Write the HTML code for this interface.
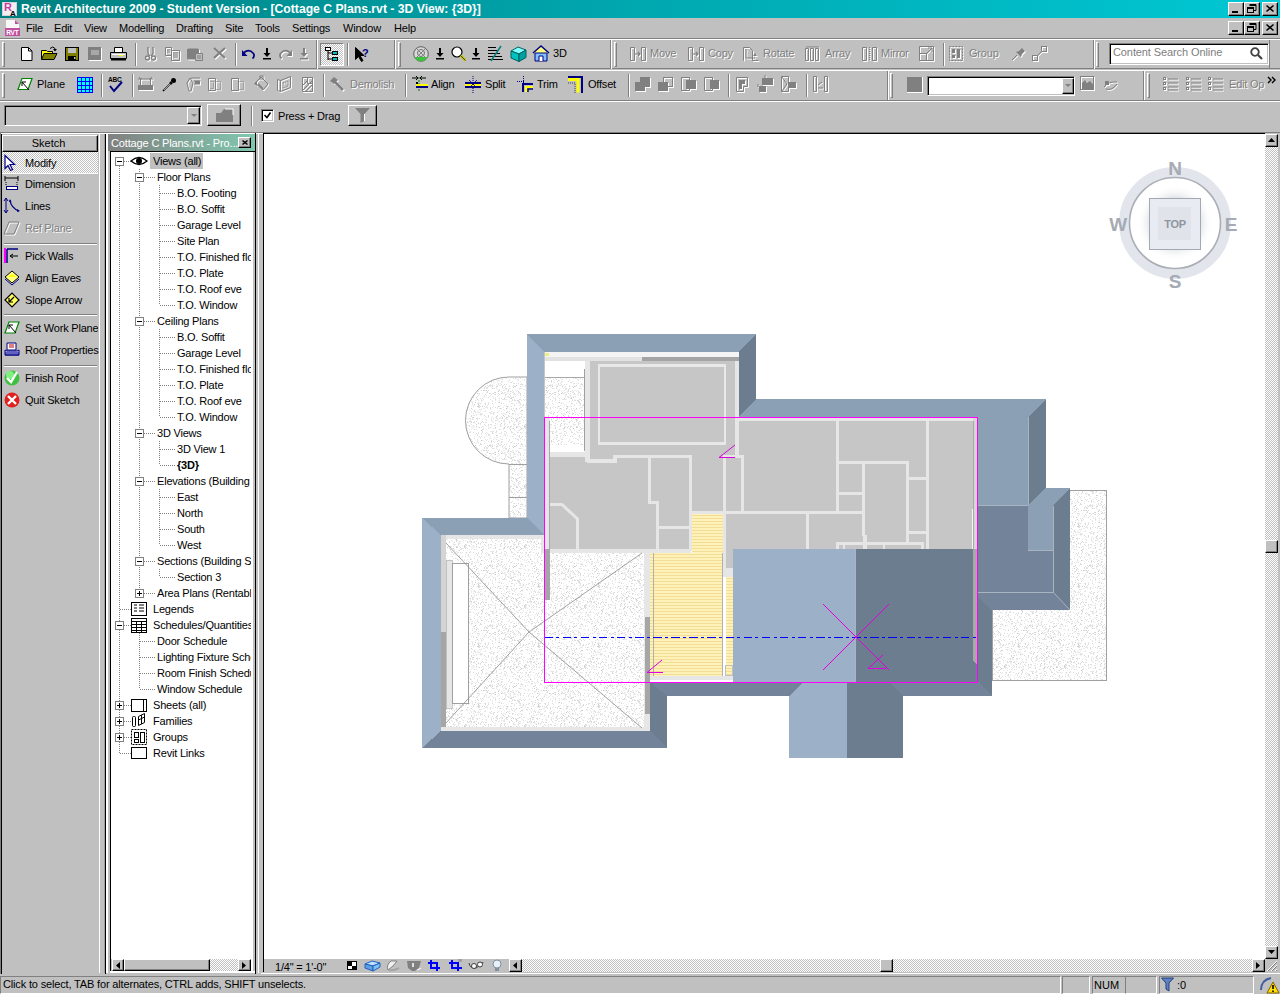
<!DOCTYPE html>
<html><head><meta charset="utf-8"><style>
*{margin:0;padding:0;box-sizing:border-box}
html,body{width:1280px;height:994px;overflow:hidden;background:#c0c0c0;font-family:"Liberation Sans",sans-serif;font-size:11px;letter-spacing:-0.2px;color:#000}
.a{position:absolute}
.t{position:absolute;white-space:nowrap;line-height:12px}
.gt{color:#808080;text-shadow:1px 1px 0 #fff}
.btn{position:absolute;background:#c0c0c0;border-top:1px solid #fff;border-left:1px solid #fff;border-right:1px solid #000;border-bottom:1px solid #000;box-shadow:inset -1px -1px 0 #808080}
.sunk{position:absolute;border-top:1px solid #808080;border-left:1px solid #808080;border-right:1px solid #fff;border-bottom:1px solid #fff}
.sunk2{position:absolute;border-top:1px solid #808080;border-left:1px solid #808080;border-right:1px solid #fff;border-bottom:1px solid #fff;box-shadow:inset 1px 1px 0 #000,inset -1px -1px 0 #c0c0c0}
.grip{position:absolute;width:3px;border-left:1px solid #fff;border-top:1px solid #fff;border-right:1px solid #808080;border-bottom:1px solid #808080}
.sep{position:absolute;width:2px;border-left:1px solid #808080;border-right:1px solid #fff}
.hsep{position:absolute;height:2px;border-top:1px solid #808080;border-bottom:1px solid #fff}
.dith{background-color:#c0c0c0;background-image:linear-gradient(45deg,#fff 25%,transparent 25%,transparent 75%,#fff 75%,#fff),linear-gradient(45deg,#fff 25%,transparent 25%,transparent 75%,#fff 75%,#fff);background-size:2px 2px;background-position:0 0,1px 1px}
svg.i{position:absolute;overflow:visible}
</style></head><body>
<div class="a" style="left:0px;top:0px;width:1280px;height:18px;background:linear-gradient(90deg,#008080 0%,#00a8b0 50%,#00c8d4 100%);"></div>
<svg class="i" style="left:2px;top:1px;" width="16" height="16" viewBox="0 0 16 16"><rect x="0.5" y="1.5" width="14" height="13" fill="#f4eef2" stroke="#d8d0d8"/><text x="2" y="10" font-size="11" font-weight="bold" fill="#c040a0" font-family="Liberation Sans">R</text><text x="8" y="15" font-size="8" font-weight="bold" fill="#000" font-family="Liberation Sans">A</text></svg>
<div class="t" style="left:21px;top:2px;color:#fff;font-weight:bold;font-size:12.2px;letter-spacing:0;line-height:14px">Revit Architecture 2009 - Student Version - [Cottage C Plans.rvt - 3D View: {3D}]</div>
<div class="btn" style="left:1228px;top:2px;width:16px;height:14px;"></div>
<div class="a" style="left:1232px;top:11px;width:6px;height:2px;background:#000;"></div>
<div class="btn" style="left:1244px;top:2px;width:16px;height:14px;"></div>
<svg class="i" style="left:1247px;top:4px;" width="10" height="9" viewBox="0 0 10 9"><path d="M3 0.5h6v6h-2M3 0v2" stroke="#000" fill="none"/><rect x="3" y="0" width="6" height="2" fill="#000"/><rect x="0.5" y="3.5" width="6" height="5" fill="none" stroke="#000"/><rect x="0" y="3" width="7" height="2" fill="#000"/></svg>
<div class="btn" style="left:1262px;top:2px;width:16px;height:14px;"></div>
<svg class="i" style="left:1266px;top:5px;" width="8" height="7" viewBox="0 0 8 7"><path d="M0.5 0.5L7.5 6.5M7.5 0.5L0.5 6.5" stroke="#000" stroke-width="1.6"/></svg>
<svg class="i" style="left:4px;top:19px;" width="17" height="17" viewBox="0 0 17 17"><path d="M2 1h9l4 4v11H2z" fill="#f8f8f8"/><path d="M11 1l4 4h-4z" fill="#c050a0"/><rect x="1" y="9" width="15" height="8" fill="#c050a0"/><text x="2.2" y="16" font-size="6.5" font-weight="bold" fill="#fff" font-family="Liberation Sans">RVT</text></svg>
<div class="t" style="left:26px;top:22px;">File</div>
<div class="t" style="left:54px;top:22px;">Edit</div>
<div class="t" style="left:84px;top:22px;">View</div>
<div class="t" style="left:119px;top:22px;">Modelling</div>
<div class="t" style="left:176px;top:22px;">Drafting</div>
<div class="t" style="left:225px;top:22px;">Site</div>
<div class="t" style="left:255px;top:22px;">Tools</div>
<div class="t" style="left:292px;top:22px;">Settings</div>
<div class="t" style="left:343px;top:22px;">Window</div>
<div class="t" style="left:394px;top:22px;">Help</div>
<div class="btn" style="left:1228px;top:21px;width:16px;height:14px;"></div>
<div class="a" style="left:1232px;top:30px;width:6px;height:2px;background:#000;"></div>
<div class="btn" style="left:1244px;top:21px;width:16px;height:14px;"></div>
<svg class="i" style="left:1247px;top:23px;" width="10" height="9" viewBox="0 0 10 9"><path d="M3 0.5h6v6h-2M3 0v2" stroke="#000" fill="none"/><rect x="3" y="0" width="6" height="2" fill="#000"/><rect x="0.5" y="3.5" width="6" height="5" fill="none" stroke="#000"/><rect x="0" y="3" width="7" height="2" fill="#000"/></svg>
<div class="btn" style="left:1262px;top:21px;width:16px;height:14px;"></div>
<svg class="i" style="left:1266px;top:24px;" width="8" height="7" viewBox="0 0 8 7"><path d="M0.5 0.5L7.5 6.5M7.5 0.5L0.5 6.5" stroke="#000" stroke-width="1.6"/></svg>
<div class="a" style="left:0px;top:38px;width:1280px;height:1px;background:#808080;"></div>
<div class="a" style="left:0px;top:39px;width:1280px;height:1px;background:#fff;"></div>
<div class="a" style="left:0px;top:68px;width:1280px;height:1px;background:#808080;"></div>
<div class="a" style="left:0px;top:70px;width:1280px;height:1px;background:#fff;"></div>
<div class="a" style="left:0px;top:100px;width:1280px;height:1px;background:#808080;"></div>
<div class="a" style="left:0px;top:101px;width:1280px;height:1px;background:#fff;"></div>
<div class="a" style="left:0px;top:132px;width:1280px;height:1px;background:#808080;"></div>
<div class="a" style="left:0px;top:133px;width:263px;height:1px;background:#fff;"></div>
<div class="a" style="left:316px;top:40px;width:1px;height:29px;background:#808080;"></div>
<div class="a" style="left:317px;top:40px;width:1px;height:29px;background:#fff;"></div>
<div class="a" style="left:394px;top:40px;width:1px;height:29px;background:#808080;"></div>
<div class="a" style="left:395px;top:40px;width:1px;height:29px;background:#fff;"></div>
<div class="a" style="left:610px;top:40px;width:1px;height:29px;background:#808080;"></div>
<div class="a" style="left:611px;top:40px;width:1px;height:29px;background:#fff;"></div>
<div class="a" style="left:1093px;top:40px;width:1px;height:29px;background:#808080;"></div>
<div class="a" style="left:1094px;top:40px;width:1px;height:29px;background:#fff;"></div>
<div class="a" style="left:887px;top:71px;width:1px;height:29px;background:#808080;"></div>
<div class="a" style="left:888px;top:71px;width:1px;height:29px;background:#fff;"></div>
<div class="a" style="left:1143px;top:71px;width:1px;height:29px;background:#808080;"></div>
<div class="a" style="left:1144px;top:71px;width:1px;height:29px;background:#fff;"></div>
<div class="a" style="left:1269px;top:40px;width:1px;height:29px;background:#808080;"></div>
<div class="grip" style="left:2px;top:42px;height:25px"></div>
<div class="grip" style="left:398px;top:42px;height:25px"></div>
<div class="grip" style="left:614px;top:42px;height:25px"></div>
<div class="grip" style="left:1096px;top:42px;height:25px"></div>
<div class="grip" style="left:2px;top:73px;height:25px"></div>
<div class="grip" style="left:890px;top:73px;height:25px"></div>
<div class="grip" style="left:1147px;top:73px;height:25px"></div>
<div class="sep" style="left:135px;top:43px;height:23px"></div>
<div class="sep" style="left:235px;top:43px;height:23px"></div>
<div class="sep" style="left:347px;top:43px;height:23px"></div>
<div class="sep" style="left:943px;top:43px;height:23px"></div>
<div class="sep" style="left:101px;top:74px;height:23px"></div>
<div class="sep" style="left:132px;top:74px;height:23px"></div>
<div class="sep" style="left:323px;top:74px;height:23px"></div>
<div class="sep" style="left:405px;top:74px;height:23px"></div>
<div class="sep" style="left:628px;top:74px;height:23px"></div>
<div class="sep" style="left:728px;top:74px;height:23px"></div>
<div class="sep" style="left:806px;top:74px;height:23px"></div>
<svg class="i" style="left:21px;top:47px;" width="12" height="14" viewBox="0 0 12 14"><path d="M0.5 0.5h7l3.5 3.5v9.5h-10.5z" fill="#fff" stroke="#000"/><path d="M7.5 0.5v3.5h3.5" fill="none" stroke="#000"/></svg>
<svg class="i" style="left:41px;top:46px;" width="17" height="15" viewBox="0 0 17 15"><path d="M0.5 4.5h5l1 1h5v7.5h-11z" fill="#ffff00" stroke="#000"/><path d="M3 7.5h13l-3 6h-12.5z" fill="#808000" stroke="#000"/><path d="M9 2.5q3-3 5 0v2" fill="none" stroke="#000"/><path d="M12 3h4l-2 2.5z" fill="#000"/></svg>
<svg class="i" style="left:65px;top:47px;" width="14" height="14" viewBox="0 0 14 14"><rect x="0.5" y="0.5" width="13" height="13" fill="#808000" stroke="#000"/><rect x="3" y="1" width="8" height="5" fill="#c0c0c0"/><rect x="3" y="9" width="8" height="5" fill="#000"/><rect x="9" y="10" width="1.5" height="2" fill="#c0c0c0"/></svg>
<svg class="i" style="left:88px;top:47px;" width="16" height="15" viewBox="0 0 16 15"><g transform="translate(1,1)" fill="#fff" stroke="#fff"><rect x="0" y="0" width="13" height="13" stroke="none"/></g><g fill="#808080" stroke="#808080"><rect x="0" y="0" width="13" height="13" stroke="none"/></g><rect x="3" y="3" width="8" height="5" fill="#a8a8a8"/></svg>
<svg class="i" style="left:110px;top:47px;" width="17" height="14" viewBox="0 0 17 14"><path d="M4.5 0.5h8v5h-8z" fill="#fff" stroke="#000"/><path d="M0.5 5.5h16v6h-16z" fill="#c0c0c0" stroke="#000"/><rect x="1" y="11" width="15" height="2.5" fill="#000"/><rect x="9" y="8" width="4" height="1" fill="#ff0"/><path d="M2 7.5h13" stroke="#fff"/></svg>
<svg class="i" style="left:145px;top:47px;" width="11" height="15" viewBox="0 0 11 15"><g transform="translate(1,1)" fill="#fff" stroke="#fff"><path d="M3 0v7M8 0v7" stroke-width="1.3"/><circle cx="2.5" cy="11" r="2" fill="none" stroke-width="1.3"/><circle cx="8.5" cy="11" r="2" fill="none" stroke-width="1.3"/><path d="M3 7l2 2M8 7l-2 2" stroke-width="1.3"/></g><g fill="#808080" stroke="#808080"><path d="M3 0v7M8 0v7" stroke-width="1.3"/><circle cx="2.5" cy="11" r="2" fill="none" stroke-width="1.3"/><circle cx="8.5" cy="11" r="2" fill="none" stroke-width="1.3"/><path d="M3 7l2 2M8 7l-2 2" stroke-width="1.3"/></g></svg>
<svg class="i" style="left:165px;top:47px;" width="16" height="15" viewBox="0 0 16 15"><g transform="translate(1,1)" fill="#fff" stroke="#fff"><path d="M0.5 0.5h6v8h-6z M6.5 3.5h8v10h-8z" fill="none"/><path d="M2 3h3M2 5h3M8 6h5M8 8h5M8 10h5" /></g><g fill="#808080" stroke="#808080"><path d="M0.5 0.5h6v8h-6z M6.5 3.5h8v10h-8z" fill="none"/><path d="M2 3h3M2 5h3M8 6h5M8 8h5M8 10h5" /></g></svg>
<svg class="i" style="left:187px;top:47px;" width="17" height="15" viewBox="0 0 17 15"><g transform="translate(1,1)" fill="#fff" stroke="#fff"><rect x="0" y="1.5" width="12" height="11" rx="1.5" stroke="none"/></g><g fill="#808080" stroke="#808080"><rect x="0" y="1.5" width="12" height="11" rx="1.5" stroke="none"/></g><path d="M8.5 6.5h7v7h-7z" fill="#c0c0c0" stroke="#808080"/><path d="M10 9h4M10 11h4" stroke="#808080"/></svg>
<svg class="i" style="left:213px;top:47px;" width="14" height="13" viewBox="0 0 14 13"><g transform="translate(1,1)" fill="#fff" stroke="#fff"><path d="M1 1L12 11M12 1L1 11" stroke-width="2.2"/></g><g fill="#808080" stroke="#808080"><path d="M1 1L12 11M12 1L1 11" stroke-width="2.2"/></g></svg>
<svg class="i" style="left:242px;top:49px;" width="13" height="10" viewBox="0 0 13 10"><path d="M2 3.5q5-4 9.5 1q1.5 3-1 5" fill="none" stroke="#000080" stroke-width="1.7"/><path d="M0 1v6h5.5z" fill="#000080"/></svg>
<svg class="i" style="left:263px;top:48px;" width="8" height="12" viewBox="0 0 8 12"><path d="M4 0v7" stroke="#000" stroke-width="2"/><path d="M0.5 5h7L4 9z" fill="#000"/><rect x="0" y="10" width="8" height="1.5" fill="#000"/></svg>
<svg class="i" style="left:279px;top:49px;" width="14" height="10" viewBox="0 0 14 10"><g transform="translate(1,1)" fill="#fff" stroke="#fff"><path d="M11 3.5q-5-4-9.5 1q-1.5 3 1 5" fill="none" stroke-width="1.7"/><path d="M13 1v6h-5.5z" stroke="none"/></g><g fill="#808080" stroke="#808080"><path d="M11 3.5q-5-4-9.5 1q-1.5 3 1 5" fill="none" stroke-width="1.7"/><path d="M13 1v6h-5.5z" stroke="none"/></g></svg>
<svg class="i" style="left:300px;top:48px;" width="9" height="13" viewBox="0 0 9 13"><g transform="translate(1,1)" fill="#fff" stroke="#fff"><path d="M4 0v7" stroke-width="2"/><path d="M0.5 5h7L4 9z" stroke="none"/><rect x="0" y="10" width="8" height="1.5" stroke="none"/></g><g fill="#808080" stroke="#808080"><path d="M4 0v7" stroke-width="2"/><path d="M0.5 5h7L4 9z" stroke="none"/><rect x="0" y="10" width="8" height="1.5" stroke="none"/></g></svg>
<div class="a dith" style="left:320px;top:43px;width:24px;height:23px;border-top:1px solid #808080;border-left:1px solid #808080;border-right:1px solid #fff;border-bottom:1px solid #fff"></div>
<svg class="i" style="left:325px;top:47px;" width="14" height="15" viewBox="0 0 14 15"><path d="M3 2v11M3 6h5M3 12h5" stroke="#000" fill="none"/><rect x="0.5" y="0.5" width="5" height="3" fill="#fff" stroke="#000"/><rect x="7.5" y="4.5" width="5" height="3" fill="#00c0c0" stroke="#000"/><rect x="7.5" y="10.5" width="5" height="3" fill="#00c0c0" stroke="#000"/></svg>
<svg class="i" style="left:355px;top:47px;" width="16" height="15" viewBox="0 0 16 15"><path d="M0.5 0.5v12l3-3l3 5l1.5-1l-3-5h4z" fill="#000" stroke="#000"/><text x="7" y="10" font-size="11" font-weight="bold" fill="#000080" font-family="Liberation Sans">?</text></svg>
<svg class="i" style="left:413px;top:46px;" width="16" height="16" viewBox="0 0 16 16"><circle cx="8" cy="8" r="7.3" fill="#d8d8d8" stroke="#606060"/><path d="M1.5 11a7 7 0 0 0 13 0z" fill="#40c040"/><circle cx="8" cy="7" r="3.5" fill="none" stroke="#707070"/><path d="M4 3l8 8M12 3l-8 8" stroke="#808080"/></svg>
<svg class="i" style="left:436px;top:48px;" width="8" height="12" viewBox="0 0 8 12"><path d="M4 0v7" stroke="#000" stroke-width="2"/><path d="M0.5 5h7L4 9z" fill="#000"/><rect x="0" y="10" width="8" height="1.5" fill="#000"/></svg>
<svg class="i" style="left:451px;top:46px;" width="16" height="16" viewBox="0 0 16 16"><circle cx="6" cy="6" r="5" fill="#fff" stroke="#000" stroke-width="1.2"/><path d="M9.5 9.5l5 5" stroke="#c0c000" stroke-width="2.5"/><path d="M9.5 9.5l5 5" stroke="#000" stroke-width="0.6"/></svg>
<svg class="i" style="left:472px;top:48px;" width="8" height="12" viewBox="0 0 8 12"><path d="M4 0v7" stroke="#000" stroke-width="2"/><path d="M0.5 5h7L4 9z" fill="#000"/><rect x="0" y="10" width="8" height="1.5" fill="#000"/></svg>
<svg class="i" style="left:488px;top:46px;" width="16" height="16" viewBox="0 0 16 16"><path d="M0 1.5h8M0 4.5h10M0 7.5h12M0 10.5h14M0 13.5h15" stroke="#000"/><path d="M3 15L13 0" stroke="#008080" stroke-width="1.5"/></svg>
<svg class="i" style="left:510px;top:46px;" width="17" height="16" viewBox="0 0 17 16"><path d="M1 5l7-4l8 3l-7 4z" fill="#80ffff" stroke="#006060"/><path d="M1 5v7l8 3.5v-7.5z" fill="#00c0c0" stroke="#006060"/><path d="M9 8l7-4v7.5l-7 4z" fill="#00a0a0" stroke="#006060"/></svg>
<svg class="i" style="left:532px;top:45px;" width="18" height="17" viewBox="0 0 18 17"><path d="M1 8l8-7l8 7" fill="#ffff80" stroke="#000080" stroke-width="1.5"/><path d="M3 8v8h12v-8z" fill="#80c0ff" stroke="#000080"/><path d="M7 16v-5h4v5" fill="#fff" stroke="#000080"/></svg>
<div class="t" style="left:553px;top:47px;letter-spacing:0">3D</div>
<svg class="i" style="left:630px;top:47px;" width="16" height="15" viewBox="0 0 16 15"><g transform="translate(1,1)" fill="#fff" stroke="#fff"><path d="M0.5 0.5h4v13h-4zM11.5 0.5h4v13h-4z" fill="none"/><path d="M5 7h5M8 5l2 2l-2 2" fill="none" stroke-width="1.2"/></g><g fill="#808080" stroke="#808080"><path d="M0.5 0.5h4v13h-4zM11.5 0.5h4v13h-4z" fill="none"/><path d="M5 7h5M8 5l2 2l-2 2" fill="none" stroke-width="1.2"/></g></svg>
<svg class="i" style="left:688px;top:47px;" width="16" height="15" viewBox="0 0 16 15"><g transform="translate(1,1)" fill="#fff" stroke="#fff"><path d="M0.5 0.5h4v13h-4zM11.5 0.5h4v13h-4z" fill="none"/><path d="M5 7h5M8 5l2 2l-2 2" fill="none" stroke-width="1.2"/></g><g fill="#808080" stroke="#808080"><path d="M0.5 0.5h4v13h-4zM11.5 0.5h4v13h-4z" fill="none"/><path d="M5 7h5M8 5l2 2l-2 2" fill="none" stroke-width="1.2"/></g></svg>
<svg class="i" style="left:743px;top:47px;" width="16" height="15" viewBox="0 0 16 15"><g transform="translate(1,1)" fill="#fff" stroke="#fff"><path d="M0.5 13.5V0.5h6l3 3V13.5h6" fill="none"/><path d="M3 2v9h9" fill="none"/><path d="M12 6l2 3h-4z" stroke="none"/></g><g fill="#808080" stroke="#808080"><path d="M0.5 13.5V0.5h6l3 3V13.5h6" fill="none"/><path d="M3 2v9h9" fill="none"/><path d="M12 6l2 3h-4z" stroke="none"/></g></svg>
<svg class="i" style="left:805px;top:47px;" width="16" height="15" viewBox="0 0 16 15"><g transform="translate(1,1)" fill="#fff" stroke="#fff"><path d="M0.5 1.5h3v12h-3zM5.5 1.5h3v12h-3zM10.5 1.5h3v12h-3z" fill="none"/><path d="M1 0h13" /></g><g fill="#808080" stroke="#808080"><path d="M0.5 1.5h3v12h-3zM5.5 1.5h3v12h-3zM10.5 1.5h3v12h-3z" fill="none"/><path d="M1 0h13" /></g></svg>
<svg class="i" style="left:862px;top:47px;" width="16" height="15" viewBox="0 0 16 15"><g transform="translate(1,1)" fill="#fff" stroke="#fff"><path d="M0.5 0.5h4v13h-4zM10.5 0.5h4v13h-4z" fill="none"/><path d="M7.5 0v14" stroke-dasharray="1 1"/></g><g fill="#808080" stroke="#808080"><path d="M0.5 0.5h4v13h-4zM10.5 0.5h4v13h-4z" fill="none"/><path d="M7.5 0v14" stroke-dasharray="1 1"/></g></svg>
<svg class="i" style="left:919px;top:46px;" width="16" height="16" viewBox="0 0 16 16"><g transform="translate(1,1)" fill="#fff" stroke="#fff"><path d="M0.5 0.5h14v14h-14z M0.5 7.5h7v7" fill="none"/><path d="M7 8l6-6M9 2h4v4" fill="none"/></g><g fill="#808080" stroke="#808080"><path d="M0.5 0.5h14v14h-14z M0.5 7.5h7v7" fill="none"/><path d="M7 8l6-6M9 2h4v4" fill="none"/></g></svg>
<svg class="i" style="left:949px;top:46px;" width="15" height="16" viewBox="0 0 15 16"><g transform="translate(1,1)" fill="#fff" stroke="#fff"><path d="M0.5 0.5h13v14h-13z" fill="none" stroke-dasharray="2 1"/><rect x="3" y="3" width="3" height="4" stroke="none"/><rect x="3" y="9" width="3" height="3" stroke="none"/><rect x="8" y="3" width="3" height="9" stroke="none"/></g><g fill="#808080" stroke="#808080"><path d="M0.5 0.5h13v14h-13z" fill="none" stroke-dasharray="2 1"/><rect x="3" y="3" width="3" height="4" stroke="none"/><rect x="3" y="9" width="3" height="3" stroke="none"/><rect x="8" y="3" width="3" height="9" stroke="none"/></g></svg>
<svg class="i" style="left:1011px;top:46px;" width="16" height="16" viewBox="0 0 16 16"><g transform="translate(1,1)" fill="#fff" stroke="#fff"><path d="M1 14l5-5" fill="none"/><path d="M5 6l5 5l1-3l3-3l-3-3l-3 3z" stroke="none"/></g><g fill="#808080" stroke="#808080"><path d="M1 14l5-5" fill="none"/><path d="M5 6l5 5l1-3l3-3l-3-3l-3 3z" stroke="none"/></g></svg>
<svg class="i" style="left:1032px;top:46px;" width="16" height="16" viewBox="0 0 16 16"><g transform="translate(1,1)" fill="#fff" stroke="#fff"><rect x="0.5" y="9.5" width="5" height="5" fill="none"/><rect x="9.5" y="0.5" width="5" height="5" fill="none"/><path d="M5 10l5-5" fill="none"/></g><g fill="#808080" stroke="#808080"><rect x="0.5" y="9.5" width="5" height="5" fill="none"/><rect x="9.5" y="0.5" width="5" height="5" fill="none"/><path d="M5 10l5-5" fill="none"/></g></svg>
<div class="t gt" style="left:650px;top:47px;">Move</div>
<div class="t gt" style="left:708px;top:47px;">Copy</div>
<div class="t gt" style="left:763px;top:47px;">Rotate</div>
<div class="t gt" style="left:825px;top:47px;">Array</div>
<div class="t gt" style="left:881px;top:47px;">Mirror</div>
<div class="t gt" style="left:969px;top:47px;">Group</div>
<div class="sunk2" style="left:1109px;top:43px;width:160px;height:22px;background:#fff"></div>
<div class="t" style="left:1113px;top:46px;color:#808080;letter-spacing:-0.1px">Content Search Online</div>
<svg class="i" style="left:1250px;top:47px;" width="13" height="13" viewBox="0 0 13 13"><circle cx="5" cy="5" r="3.8" fill="none" stroke="#404040" stroke-width="1.8"/><path d="M8 8l4 4" stroke="#404040" stroke-width="2.2"/></svg>
<svg class="i" style="left:17px;top:77px;" width="16" height="15" viewBox="0 0 16 15"><path d="M5 1.5h10l-4 11h-10z" fill="#fff" stroke="#008000" stroke-width="1.2"/><path d="M5 5l7 8M5 5v4M5 5h4" stroke="#000" fill="none"/></svg>
<div class="t" style="left:37px;top:78px;letter-spacing:0">Plane</div>
<svg class="i" style="left:77px;top:77px;" width="16" height="16" viewBox="0 0 16 16"><rect x="0" y="0" width="16" height="16" fill="#00ffff"/><path d="M0.5 0v16M4.5 0v16M8.5 0v16M12.5 0v16M15.5 0v16M0 0.5h16M0 4.5h16M0 8.5h16M0 12.5h16M0 15.5h16" stroke="#0000ff"/></svg>
<svg class="i" style="left:108px;top:76px;" width="15" height="17" viewBox="0 0 15 17"><text x="0" y="6" font-size="6.5" font-weight="bold" fill="#000" font-family="Liberation Sans">ABC</text><path d="M2 10l4 5l8-9" fill="none" stroke="#000080" stroke-width="2"/></svg>
<svg class="i" style="left:138px;top:76px;" width="17" height="16" viewBox="0 0 17 16"><g transform="translate(1,1)" fill="#fff" stroke="#fff"><rect x="0" y="9" width="15" height="5" stroke="none"/><path d="M2.5 9V3h10v6M0 3h4M11 3h4M1 1l2 2M14 1l-2 2" fill="none"/></g><g fill="#808080" stroke="#808080"><rect x="0" y="9" width="15" height="5" stroke="none"/><path d="M2.5 9V3h10v6M0 3h4M11 3h4M1 1l2 2M14 1l-2 2" fill="none"/></g></svg>
<svg class="i" style="left:162px;top:77px;" width="15" height="15" viewBox="0 0 15 15"><path d="M1 14l8-8" stroke="#000" stroke-width="1.6"/><path d="M2 13l7-7" stroke="#fff" stroke-width="0.6"/><circle cx="11.5" cy="3.5" r="2.5" fill="#000"/><path d="M8 5l2 2" stroke="#000" stroke-width="2"/></svg>
<svg class="i" style="left:186px;top:77px;" width="15" height="15" viewBox="0 0 15 15"><g transform="translate(1,1)" fill="#fff" stroke="#fff"><path d="M4 1l3 5l-2 8h-2l-2-8z" fill="none"/><path d="M5 1h9M8 4h6M8 7h6" fill="none"/><rect x="9" y="4" width="5" height="3" stroke="none"/></g><g fill="#808080" stroke="#808080"><path d="M4 1l3 5l-2 8h-2l-2-8z" fill="none"/><path d="M5 1h9M8 4h6M8 7h6" fill="none"/><rect x="9" y="4" width="5" height="3" stroke="none"/></g></svg>
<svg class="i" style="left:208px;top:77px;" width="14" height="15" viewBox="0 0 14 15"><g transform="translate(1,1)" fill="#fff" stroke="#fff"><path d="M0.5 1.5h7v12h-7z" fill="none"/><path d="M2.5 4.5h3v7h-3" fill="none" stroke-dasharray="1 1"/><path d="M7.5 4.5h5v8h-5z" fill="none" stroke-dasharray="1 1"/></g><g fill="#808080" stroke="#808080"><path d="M0.5 1.5h7v12h-7z" fill="none"/><path d="M2.5 4.5h3v7h-3" fill="none" stroke-dasharray="1 1"/><path d="M7.5 4.5h5v8h-5z" fill="none" stroke-dasharray="1 1"/></g></svg>
<svg class="i" style="left:231px;top:77px;" width="14" height="15" viewBox="0 0 14 15"><g transform="translate(1,1)" fill="#fff" stroke="#fff"><path d="M0.5 1.5h7v12h-7z" fill="none"/><path d="M7.5 4.5h5v8h-5z" fill="none" stroke-dasharray="1 1"/></g><g fill="#808080" stroke="#808080"><path d="M0.5 1.5h7v12h-7z" fill="none"/><path d="M7.5 4.5h5v8h-5z" fill="none" stroke-dasharray="1 1"/></g></svg>
<svg class="i" style="left:254px;top:76px;" width="15" height="16" viewBox="0 0 15 16"><g transform="translate(1,1)" fill="#fff" stroke="#fff"><path d="M1 7l6-6l7 7l-5 6z" fill="none"/><path d="M0 8l3-3v5z" stroke="none"/><rect x="6" y="0" width="3" height="3" fill="none"/><path d="M4 8l5 5" stroke-width="2"/></g><g fill="#808080" stroke="#808080"><path d="M1 7l6-6l7 7l-5 6z" fill="none"/><path d="M0 8l3-3v5z" stroke="none"/><rect x="6" y="0" width="3" height="3" fill="none"/><path d="M4 8l5 5" stroke-width="2"/></g></svg>
<svg class="i" style="left:277px;top:76px;" width="15" height="16" viewBox="0 0 15 16"><g transform="translate(1,1)" fill="#fff" stroke="#fff"><path d="M0.5 3.5l3 1v11l-3-1z M3.5 4.5l10-4v11l-10 4z" fill="none"/><path d="M6 7l5-2v5l-5 2z" fill="none" stroke-dasharray="1 1"/></g><g fill="#808080" stroke="#808080"><path d="M0.5 3.5l3 1v11l-3-1z M3.5 4.5l10-4v11l-10 4z" fill="none"/><path d="M6 7l5-2v5l-5 2z" fill="none" stroke-dasharray="1 1"/></g></svg>
<svg class="i" style="left:302px;top:77px;" width="12" height="15" viewBox="0 0 12 15"><g transform="translate(1,1)" fill="#fff" stroke="#fff"><path d="M0.5 0.5h10v14h-10z" fill="none"/><path d="M5.5 0.5v6h5M1 8l5-5M1 13l9-9M4 14l6-6" fill="none"/></g><g fill="#808080" stroke="#808080"><path d="M0.5 0.5h10v14h-10z" fill="none"/><path d="M5.5 0.5v6h5M1 8l5-5M1 13l9-9M4 14l6-6" fill="none"/></g></svg>
<div class="t gt" style="left:350px;top:78px;">Demolish</div>
<svg class="i" style="left:412px;top:76px;" width="16" height="17" viewBox="0 0 16 17"><path d="M0 2h6M8 2h6M4 0l2 2l-2 2M10 0l-2 2l2 2" stroke="#000" fill="none"/><path d="M7 1v15" stroke="#008000" stroke-dasharray="2 1"/><rect x="4" y="8" width="12" height="2" fill="#ff0"/><rect x="4" y="10" width="12" height="2" fill="#000080"/><rect x="4" y="6" width="2" height="2" fill="#000"/></svg>
<div class="t" style="left:431px;top:78px;">Align</div>
<svg class="i" style="left:465px;top:76px;" width="16" height="17" viewBox="0 0 16 17"><rect x="0" y="6" width="16" height="2" fill="#000080"/><rect x="0" y="8" width="16" height="2" fill="#ff0"/><rect x="0" y="10" width="16" height="2" fill="#000080"/><path d="M8 0v17" stroke="#000080" stroke-dasharray="1 1"/><path d="M4 4l8 8M12 4l-8 8" stroke="#000080" stroke-width="0.8"/></svg>
<div class="t" style="left:485px;top:78px;">Split</div>
<svg class="i" style="left:517px;top:76px;" width="16" height="17" viewBox="0 0 16 17"><path d="M0 5.5h8M6.5 0v8" stroke="#000080" stroke-dasharray="1 1"/><path d="M6 16V8h10" fill="none" stroke="#000080" stroke-width="2"/><path d="M9 16v-5h7" fill="none" stroke="#ff0" stroke-width="2"/><path d="M11 16v-3h5" fill="none" stroke="#000080" stroke-width="1.5"/></svg>
<div class="t" style="left:537px;top:78px;">Trim</div>
<svg class="i" style="left:568px;top:76px;" width="16" height="17" viewBox="0 0 16 17"><path d="M0 1h14v16" fill="none" stroke="#000080" stroke-width="2"/><path d="M0 3.5h10v13" fill="none" stroke="#ff0" stroke-width="3"/><path d="M0 7h7v10" fill="none" stroke="#808080" stroke-width="2" stroke-dasharray="1 1"/></svg>
<div class="t" style="left:588px;top:78px;">Offset</div>
<svg class="i" style="left:635px;top:76px;" width="16" height="16" viewBox="0 0 16 16"><g transform="translate(1,1)" fill="#fff" stroke="#fff"><rect x="5" y="1" width="10" height="10" stroke="none"/><rect x="0" y="6" width="10" height="9" stroke="none"/></g><g fill="#808080" stroke="#808080"><rect x="5" y="1" width="10" height="10" stroke="none"/><rect x="0" y="6" width="10" height="9" stroke="none"/></g></svg>
<svg class="i" style="left:658px;top:76px;" width="16" height="16" viewBox="0 0 16 16"><g transform="translate(1,1)" fill="#fff" stroke="#fff"><rect x="5.5" y="1.5" width="9" height="9" fill="none"/><rect x="0" y="6" width="10" height="9" stroke="none"/></g><g fill="#808080" stroke="#808080"><rect x="5.5" y="1.5" width="9" height="9" fill="none"/><rect x="0" y="6" width="10" height="9" stroke="none"/></g></svg>
<svg class="i" style="left:681px;top:76px;" width="16" height="16" viewBox="0 0 16 16"><g transform="translate(1,1)" fill="#fff" stroke="#fff"><path d="M0.5 1.5h8v13h-8z" fill="none"/><rect x="5" y="4" width="10" height="9" stroke="none"/></g><g fill="#808080" stroke="#808080"><path d="M0.5 1.5h8v13h-8z" fill="none"/><rect x="5" y="4" width="10" height="9" stroke="none"/></g></svg>
<svg class="i" style="left:704px;top:76px;" width="16" height="16" viewBox="0 0 16 16"><g transform="translate(1,1)" fill="#fff" stroke="#fff"><path d="M0.5 1.5h8v13h-8z" fill="none"/><rect x="6" y="4" width="9" height="9" stroke="none"/></g><g fill="#808080" stroke="#808080"><path d="M0.5 1.5h8v13h-8z" fill="none"/><rect x="6" y="4" width="9" height="9" stroke="none"/></g></svg>
<svg class="i" style="left:736px;top:76px;" width="16" height="16" viewBox="0 0 16 16"><g transform="translate(1,1)" fill="#fff" stroke="#fff"><path d="M0.5 1.5h11v9h-4v5h-7z" fill="none"/><path d="M3 4h6v4h-3v5h-3z" stroke="none"/></g><g fill="#808080" stroke="#808080"><path d="M0.5 1.5h11v9h-4v5h-7z" fill="none"/><path d="M3 4h6v4h-3v5h-3z" stroke="none"/></g></svg>
<svg class="i" style="left:758px;top:75px;" width="16" height="17" viewBox="0 0 16 17"><g transform="translate(1,1)" fill="#fff" stroke="#fff"><rect x="4" y="3" width="11" height="7" stroke="none"/><rect x="1" y="11" width="7" height="6" stroke="none"/><path d="M7 0v3M0 9v3" fill="none"/></g><g fill="#808080" stroke="#808080"><rect x="4" y="3" width="11" height="7" stroke="none"/><rect x="1" y="11" width="7" height="6" stroke="none"/><path d="M7 0v3M0 9v3" fill="none"/></g></svg>
<svg class="i" style="left:781px;top:76px;" width="16" height="16" viewBox="0 0 16 16"><g transform="translate(1,1)" fill="#fff" stroke="#fff"><path d="M0.5 0.5h7v15h-7z" fill="none"/><path d="M1 1l5 7l-5 7" fill="none"/><rect x="7" y="6" width="8" height="6" stroke="none"/></g><g fill="#808080" stroke="#808080"><path d="M0.5 0.5h7v15h-7z" fill="none"/><path d="M1 1l5 7l-5 7" fill="none"/><rect x="7" y="6" width="8" height="6" stroke="none"/></g></svg>
<svg class="i" style="left:813px;top:76px;" width="16" height="16" viewBox="0 0 16 16"><g transform="translate(1,1)" fill="#fff" stroke="#fff"><path d="M0.5 0.5h3v15h-3zM11.5 0.5h3v15h-3z" fill="none"/><path d="M5 9l4-3M5 12h5" fill="none"/></g><g fill="#808080" stroke="#808080"><path d="M0.5 0.5h3v15h-3zM11.5 0.5h3v15h-3z" fill="none"/><path d="M5 9l4-3M5 12h5" fill="none"/></g></svg>
<svg class="i" style="left:329px;top:76px;" width="16" height="16" viewBox="0 0 16 16"><g transform="translate(1,1)" fill="#fff" stroke="#fff"><path d="M1 5l4-4l4 3l-4 4z" stroke="none"/><path d="M6 6l8 8" stroke-width="2.5"/></g><g fill="#808080" stroke="#808080"><path d="M1 5l4-4l4 3l-4 4z" stroke="none"/><path d="M6 6l8 8" stroke-width="2.5"/></g></svg>
<div class="a" style="left:907px;top:77px;width:16px;height:16px;background:#808080;border-right:1px solid #fff;border-bottom:1px solid #fff"></div>
<div class="sunk2" style="left:927px;top:76px;width:148px;height:20px;background:#fff"></div>
<div class="btn" style="left:1062px;top:78px;width:12px;height:16px;"></div>
<svg class="i" style="left:1065px;top:84px;" width="6" height="3" viewBox="0 0 6 3"><path d="M0 0h6L3 3z" fill="#808080"/></svg>
<svg class="i" style="left:1080px;top:76px;" width="16" height="16" viewBox="0 0 16 16"><g transform="translate(1,1)" fill="#fff" stroke="#fff"><rect x="0.5" y="0.5" width="13" height="13" fill="none"/><path d="M2 13V7l3-3l2 3l3-2l3 3v5z" stroke="none"/></g><g fill="#808080" stroke="#808080"><rect x="0.5" y="0.5" width="13" height="13" fill="none"/><path d="M2 13V7l3-3l2 3l3-2l3 3v5z" stroke="none"/></g></svg>
<svg class="i" style="left:1103px;top:76px;" width="17" height="16" viewBox="0 0 17 16"><g transform="translate(1,1)" fill="#fff" stroke="#fff"><path d="M1 11q5-6 13-5M3 13q6 2 11-5" fill="none"/><rect x="2" y="5" width="4" height="4" stroke="none"/></g><g fill="#808080" stroke="#808080"><path d="M1 11q5-6 13-5M3 13q6 2 11-5" fill="none"/><rect x="2" y="5" width="4" height="4" stroke="none"/></g></svg>
<svg class="i" style="left:1163px;top:77px;" width="16" height="15" viewBox="0 0 16 15"><g transform="translate(1,1)" fill="#fff" stroke="#fff"><rect x="0.5" y="0.5" width="2" height="2" fill="none"/><rect x="0.5" y="5.5" width="2" height="2" fill="none"/><rect x="0.5" y="10.5" width="2" height="2" fill="none"/><path d="M5 2h10M5 6h10M5 10h10M5 13h10" fill="none"/></g><g fill="#808080" stroke="#808080"><rect x="0.5" y="0.5" width="2" height="2" fill="none"/><rect x="0.5" y="5.5" width="2" height="2" fill="none"/><rect x="0.5" y="10.5" width="2" height="2" fill="none"/><path d="M5 2h10M5 6h10M5 10h10M5 13h10" fill="none"/></g></svg>
<svg class="i" style="left:1186px;top:77px;" width="16" height="15" viewBox="0 0 16 15"><g transform="translate(1,1)" fill="#fff" stroke="#fff"><rect x="0.5" y="0.5" width="2" height="2" fill="none"/><rect x="0.5" y="5.5" width="2" height="2" fill="none"/><rect x="0.5" y="10.5" width="2" height="2" fill="none"/><path d="M5 2h10M5 6h10M5 10h10M5 13h10" fill="none"/></g><g fill="#808080" stroke="#808080"><rect x="0.5" y="0.5" width="2" height="2" fill="none"/><rect x="0.5" y="5.5" width="2" height="2" fill="none"/><rect x="0.5" y="10.5" width="2" height="2" fill="none"/><path d="M5 2h10M5 6h10M5 10h10M5 13h10" fill="none"/></g></svg>
<svg class="i" style="left:1208px;top:77px;" width="16" height="15" viewBox="0 0 16 15"><g transform="translate(1,1)" fill="#fff" stroke="#fff"><rect x="0.5" y="0.5" width="2" height="2" fill="none"/><rect x="0.5" y="5.5" width="2" height="2" fill="none"/><rect x="0.5" y="10.5" width="2" height="2" fill="none"/><path d="M5 2h10M5 6h10M5 10h10M5 13h10" fill="none"/></g><g fill="#808080" stroke="#808080"><rect x="0.5" y="0.5" width="2" height="2" fill="none"/><rect x="0.5" y="5.5" width="2" height="2" fill="none"/><rect x="0.5" y="10.5" width="2" height="2" fill="none"/><path d="M5 2h10M5 6h10M5 10h10M5 13h10" fill="none"/></g></svg>
<div class="t gt" style="left:1229px;top:78px;">Edit Op</div>
<svg class="i" style="left:1268px;top:77px;" width="8" height="7" viewBox="0 0 8 7"><path d="M0 0l3 3l-3 3M4 0l3 3l-3 3" stroke="#000" fill="none" stroke-width="1.4"/></svg>
<div class="sunk2" style="left:4px;top:105px;width:198px;height:21px;background:#c0c0c0"></div>
<div class="btn" style="left:187px;top:107px;width:13px;height:17px;"></div>
<svg class="i" style="left:191px;top:114px;" width="6" height="3" viewBox="0 0 6 3"><path d="M0 0h6L3 3z" fill="#808080"/></svg>
<div class="btn" style="left:207px;top:104px;width:34px;height:22px;"></div>
<svg class="i" style="left:216px;top:108px;" width="17" height="14" viewBox="0 0 17 14"><path d="M0 5h5l3-4h9v13h-17z" fill="#808080"/><path d="M9 1h8v6" fill="none" stroke="#fff"/></svg>
<div class="sep" style="left:251px;top:106px;height:20px"></div>
<div class="sunk2" style="left:261px;top:109px;width:13px;height:13px;background:#fff"></div>
<svg class="i" style="left:264px;top:112px;" width="7" height="7" viewBox="0 0 7 7"><path d="M0.5 3l2.5 2.5l3.5-5" stroke="#000" stroke-width="1.6" fill="none"/></svg>
<div class="t" style="left:278px;top:110px;">Press + Drag</div>
<div class="btn" style="left:348px;top:105px;width:29px;height:21px;"></div>
<svg class="i" style="left:355px;top:108px;" width="15" height="15" viewBox="0 0 15 15"><path d="M0 0h15l-5.5 6v7l-4 2v-9z" fill="#808080"/><path d="M9.5 6v7" stroke="#fff"/></svg>
<div class="a" style="left:0px;top:133px;width:1px;height:841px;background:#808080;"></div>
<div class="a" style="left:1px;top:134px;width:1px;height:840px;background:#000;"></div>
<div class="a" style="left:99px;top:134px;width:1px;height:839px;background:#fff;"></div>
<div class="a" style="left:104px;top:134px;width:1px;height:839px;background:#a0a0a0;"></div>
<div class="a" style="left:105px;top:134px;width:1px;height:840px;background:#000;"></div>
<div class="a" style="left:106px;top:134px;width:2px;height:839px;background:#fff;"></div>
<div class="btn" style="left:2px;top:135px;width:96px;height:17px;"></div>
<div class="t" style="left:0px;top:137px;width:97px;text-align:center;letter-spacing:0">Sketch</div>
<div class="a dith" style="left:2px;top:152px;width:96px;height:21px"></div>
<div class="a" style="left:2px;top:173px;width:96px;height:1px;background:#fff;"></div>
<div class="t" style="left:25px;top:157px;">Modify</div>
<div class="t" style="left:25px;top:178px;">Dimension</div>
<div class="t" style="left:25px;top:200px;">Lines</div>
<div class="t gt" style="left:25px;top:222px;">Ref Plane</div>
<div class="t" style="left:25px;top:250px;">Pick Walls</div>
<div class="t" style="left:25px;top:272px;">Align Eaves</div>
<div class="t" style="left:25px;top:294px;">Slope Arrow</div>
<div class="t" style="left:25px;top:322px;width:73px;overflow:hidden">Set Work Plane</div>
<div class="t" style="left:25px;top:344px;">Roof Properties</div>
<div class="t" style="left:25px;top:372px;">Finish Roof</div>
<div class="t" style="left:25px;top:394px;">Quit Sketch</div>
<div class="hsep" style="left:4px;top:243px;width:93px"></div>
<div class="hsep" style="left:4px;top:314px;width:93px"></div>
<div class="hsep" style="left:4px;top:365px;width:93px"></div>
<svg class="i" style="left:4px;top:155px;" width="16" height="16" viewBox="0 0 16 16"><path d="M1 0.5v13l3-3l2.5 5l2-1l-2.5-5h4.5z" fill="#fff" stroke="#000080" stroke-width="1.2"/></svg>
<svg class="i" style="left:4px;top:176px;" width="16" height="16" viewBox="0 0 16 16"><path d="M1 2h13M1 0v5M14 0v5" stroke="#000" fill="none"/><path d="M2 6v4M13 6v4" stroke="#000" stroke-dasharray="1 1"/><rect x="2.5" y="10.5" width="11" height="3" fill="#fff" stroke="#000080"/></svg>
<svg class="i" style="left:4px;top:198px;" width="16" height="16" viewBox="0 0 16 16"><path d="M2 0v15M0 3l2-3l2 3M0 12l2 3l2-3" stroke="#000080" fill="none"/><path d="M6 2q1 8 9 11" stroke="#000080" fill="none" stroke-width="1.3"/><path d="M5 4l1-3l1.5 3M13 11l3 2l-3 1" fill="#000080"/></svg>
<svg class="i" style="left:4px;top:220px;" width="16" height="16" viewBox="0 0 16 16"><g transform="translate(1,1)" stroke="#fff" fill="none"><path d="M5 2h10l-5 12h-10z"/></g><path d="M5 2h10l-5 12h-10z" stroke="#808080" fill="none"/></svg>
<svg class="i" style="left:4px;top:248px;" width="16" height="16" viewBox="0 0 16 16"><path d="M1 0v15" stroke="#ff00ff" stroke-width="2"/><path d="M3 1v14M3 1h11" stroke="#000080" stroke-width="1.5" fill="none"/><path d="M6 8h8M6 8l3-2M6 8l3 2" stroke="#000" fill="none"/></svg>
<svg class="i" style="left:4px;top:270px;" width="16" height="16" viewBox="0 0 16 16"><path d="M1 7l7-6l7 6l-7 6z" fill="#ffff80" stroke="#000"/><path d="M1 9l7 6l7-6" fill="none" stroke="#000080"/><path d="M4 7l4-3l4 3" fill="#ff0" stroke="none"/></svg>
<svg class="i" style="left:4px;top:292px;" width="16" height="16" viewBox="0 0 16 16"><path d="M1 8l7-7l7 7l-7 7z" fill="#ffff60" stroke="#000" stroke-width="1.2"/><path d="M10 5l-5 5M5 6v4h4" stroke="#000" fill="none" stroke-width="1.2"/></svg>
<svg class="i" style="left:4px;top:320px;" width="16" height="16" viewBox="0 0 16 16"><path d="M5 2h10l-4 11h-10z" fill="#fff" stroke="#008000" stroke-width="1.2"/><path d="M5 5l7 8M5 5v4M5 5h4" stroke="#000" fill="none"/></svg>
<svg class="i" style="left:4px;top:342px;" width="16" height="16" viewBox="0 0 16 16"><path d="M3 1h9v7h-9z" fill="#fff" stroke="#000080"/><path d="M5 3h5M5 5h5" stroke="#c00000"/><path d="M1 8l2 1h10l2-1v5h-14z" fill="#c0c0ff" stroke="#000080"/><path d="M1 11h14M1 13h14" stroke="#000080"/></svg>
<svg class="i" style="left:4px;top:370px;" width="16" height="16" viewBox="0 0 16 16"><circle cx="8" cy="8" r="7.5" fill="#40c040"/><circle cx="6" cy="5" r="4" fill="#80f080"/><path d="M3 8l4 4l6-10" stroke="#fff" stroke-width="2.4" fill="none"/></svg>
<svg class="i" style="left:4px;top:392px;" width="16" height="16" viewBox="0 0 16 16"><circle cx="8" cy="8" r="7.5" fill="#e02020"/><path d="M4 4l8 8M12 4l-8 8" stroke="#fff" stroke-width="2.4"/></svg>
<div class="a" style="left:108px;top:134px;width:147px;height:17px;background:linear-gradient(90deg,#808080,#80c8b0)"></div>
<div class="t" style="left:111px;top:137px;color:#fff;letter-spacing:-0.15px">Cottage C Plans.rvt - Pro...</div>
<div class="btn" style="left:238px;top:137px;width:13px;height:11px;"></div>
<svg class="i" style="left:242px;top:140px;" width="6" height="5" viewBox="0 0 6 5"><path d="M0.5 0.5l5 4M5.5 0.5l-5 4" stroke="#000" stroke-width="1.6"/></svg>
<div class="a" style="left:110px;top:151px;width:145px;height:1px;background:#000;"></div>
<div class="a" style="left:110px;top:151px;width:1px;height:821px;background:#000;"></div>
<div class="a" style="left:111px;top:152px;width:140px;height:807px;background:#fff;"></div>
<div class="a" style="left:251px;top:152px;width:2px;height:820px;background:#fff;"></div>
<div class="a" style="left:110px;top:971px;width:145px;height:2px;background:#fff;"></div>
<div class="a" style="left:150px;top:153px;width:53px;height:16px;background:#c0c0c0"></div>
<div class="t" style="left:153px;top:155px;width:98px;overflow:hidden">Views (all)</div>
<div class="t" style="left:157px;top:171px;width:94px;overflow:hidden">Floor Plans</div>
<div class="t" style="left:177px;top:187px;width:74px;overflow:hidden">B.O. Footing</div>
<div class="t" style="left:177px;top:203px;width:74px;overflow:hidden">B.O. Soffit</div>
<div class="t" style="left:177px;top:219px;width:74px;overflow:hidden">Garage Level</div>
<div class="t" style="left:177px;top:235px;width:74px;overflow:hidden">Site Plan</div>
<div class="t" style="left:177px;top:251px;width:74px;overflow:hidden">T.O. Finished flo</div>
<div class="t" style="left:177px;top:267px;width:74px;overflow:hidden">T.O. Plate</div>
<div class="t" style="left:177px;top:283px;width:74px;overflow:hidden">T.O. Roof eve</div>
<div class="t" style="left:177px;top:299px;width:74px;overflow:hidden">T.O. Window</div>
<div class="t" style="left:157px;top:315px;width:94px;overflow:hidden">Ceiling Plans</div>
<div class="t" style="left:177px;top:331px;width:74px;overflow:hidden">B.O. Soffit</div>
<div class="t" style="left:177px;top:347px;width:74px;overflow:hidden">Garage Level</div>
<div class="t" style="left:177px;top:363px;width:74px;overflow:hidden">T.O. Finished flo</div>
<div class="t" style="left:177px;top:379px;width:74px;overflow:hidden">T.O. Plate</div>
<div class="t" style="left:177px;top:395px;width:74px;overflow:hidden">T.O. Roof eve</div>
<div class="t" style="left:177px;top:411px;width:74px;overflow:hidden">T.O. Window</div>
<div class="t" style="left:157px;top:427px;width:94px;overflow:hidden">3D Views</div>
<div class="t" style="left:177px;top:443px;width:74px;overflow:hidden">3D View 1</div>
<div class="t" style="left:177px;top:459px;width:74px;overflow:hidden"><b>{3D}</b></div>
<div class="t" style="left:157px;top:475px;width:94px;overflow:hidden">Elevations (Building Elevation)</div>
<div class="t" style="left:177px;top:491px;width:74px;overflow:hidden">East</div>
<div class="t" style="left:177px;top:507px;width:74px;overflow:hidden">North</div>
<div class="t" style="left:177px;top:523px;width:74px;overflow:hidden">South</div>
<div class="t" style="left:177px;top:539px;width:74px;overflow:hidden">West</div>
<div class="t" style="left:157px;top:555px;width:94px;overflow:hidden">Sections (Building Section)</div>
<div class="t" style="left:177px;top:571px;width:74px;overflow:hidden">Section 3</div>
<div class="t" style="left:157px;top:587px;width:94px;overflow:hidden">Area Plans (Rentable)</div>
<div class="t" style="left:153px;top:603px;width:98px;overflow:hidden">Legends</div>
<div class="t" style="left:153px;top:619px;width:98px;overflow:hidden">Schedules/Quantities</div>
<div class="t" style="left:157px;top:635px;width:94px;overflow:hidden">Door Schedule</div>
<div class="t" style="left:157px;top:651px;width:94px;overflow:hidden">Lighting Fixture Schedule</div>
<div class="t" style="left:157px;top:667px;width:94px;overflow:hidden">Room Finish Schedule</div>
<div class="t" style="left:157px;top:683px;width:94px;overflow:hidden">Window Schedule</div>
<div class="t" style="left:153px;top:699px;width:98px;overflow:hidden">Sheets (all)</div>
<div class="t" style="left:153px;top:715px;width:98px;overflow:hidden">Families</div>
<div class="t" style="left:153px;top:731px;width:98px;overflow:hidden">Groups</div>
<div class="t" style="left:153px;top:747px;width:98px;overflow:hidden">Revit Links</div>
<svg class="i" style="left:0px;top:0px;pointer-events:none" width="260" height="994" viewBox="0 0 260 994"><path d="M119.5 166V753" stroke="#808080" stroke-dasharray="1 1"/><path d="M139.5 169V593" stroke="#808080" stroke-dasharray="1 1"/><path d="M159.5 185V305M159.5 329V417M159.5 441V465M159.5 489V545M159.5 569V577" stroke="#808080" stroke-dasharray="1 1"/><path d="M139.5 633V689" stroke="#808080" stroke-dasharray="1 1"/><path d="M124 161.5H131" stroke="#808080" stroke-dasharray="1 1"/><rect x="115.5" y="157.5" width="8" height="8" fill="#fff" stroke="#808080"/><path d="M117 161.5h5" stroke="#000"/><path d="M131 161q8-7 16 0q-8 7-16 0z" fill="#fff" stroke="#000" stroke-width="1.3"/><circle cx="139" cy="161" r="3" fill="#000"/><path d="M144 177.5H156" stroke="#808080" stroke-dasharray="1 1"/><rect x="135.5" y="173.5" width="8" height="8" fill="#fff" stroke="#808080"/><path d="M137 177.5h5" stroke="#000"/><path d="M160 193.5H176" stroke="#808080" stroke-dasharray="1 1"/><path d="M160 209.5H176" stroke="#808080" stroke-dasharray="1 1"/><path d="M160 225.5H176" stroke="#808080" stroke-dasharray="1 1"/><path d="M160 241.5H176" stroke="#808080" stroke-dasharray="1 1"/><path d="M160 257.5H176" stroke="#808080" stroke-dasharray="1 1"/><path d="M160 273.5H176" stroke="#808080" stroke-dasharray="1 1"/><path d="M160 289.5H176" stroke="#808080" stroke-dasharray="1 1"/><path d="M160 305.5H176" stroke="#808080" stroke-dasharray="1 1"/><path d="M144 321.5H156" stroke="#808080" stroke-dasharray="1 1"/><rect x="135.5" y="317.5" width="8" height="8" fill="#fff" stroke="#808080"/><path d="M137 321.5h5" stroke="#000"/><path d="M160 337.5H176" stroke="#808080" stroke-dasharray="1 1"/><path d="M160 353.5H176" stroke="#808080" stroke-dasharray="1 1"/><path d="M160 369.5H176" stroke="#808080" stroke-dasharray="1 1"/><path d="M160 385.5H176" stroke="#808080" stroke-dasharray="1 1"/><path d="M160 401.5H176" stroke="#808080" stroke-dasharray="1 1"/><path d="M160 417.5H176" stroke="#808080" stroke-dasharray="1 1"/><path d="M144 433.5H156" stroke="#808080" stroke-dasharray="1 1"/><rect x="135.5" y="429.5" width="8" height="8" fill="#fff" stroke="#808080"/><path d="M137 433.5h5" stroke="#000"/><path d="M160 449.5H176" stroke="#808080" stroke-dasharray="1 1"/><path d="M160 465.5H176" stroke="#808080" stroke-dasharray="1 1"/><path d="M144 481.5H156" stroke="#808080" stroke-dasharray="1 1"/><rect x="135.5" y="477.5" width="8" height="8" fill="#fff" stroke="#808080"/><path d="M137 481.5h5" stroke="#000"/><path d="M160 497.5H176" stroke="#808080" stroke-dasharray="1 1"/><path d="M160 513.5H176" stroke="#808080" stroke-dasharray="1 1"/><path d="M160 529.5H176" stroke="#808080" stroke-dasharray="1 1"/><path d="M160 545.5H176" stroke="#808080" stroke-dasharray="1 1"/><path d="M144 561.5H156" stroke="#808080" stroke-dasharray="1 1"/><rect x="135.5" y="557.5" width="8" height="8" fill="#fff" stroke="#808080"/><path d="M137 561.5h5" stroke="#000"/><path d="M160 577.5H176" stroke="#808080" stroke-dasharray="1 1"/><path d="M144 593.5H156" stroke="#808080" stroke-dasharray="1 1"/><rect x="135.5" y="589.5" width="8" height="8" fill="#fff" stroke="#808080"/><path d="M137 593.5h5" stroke="#000"/><path d="M139.5 591v5" stroke="#000"/><path d="M120 609.5H131" stroke="#808080" stroke-dasharray="1 1"/><rect x="131.5" y="602.5" width="15" height="13" fill="#fff" stroke="#000"/><path d="M134 605h3M134 608h3M134 611h3M139 605h5M139 608h5M139 611h5" stroke="#000"/><path d="M124 625.5H131" stroke="#808080" stroke-dasharray="1 1"/><rect x="115.5" y="621.5" width="8" height="8" fill="#fff" stroke="#808080"/><path d="M117 625.5h5" stroke="#000"/><rect x="131.5" y="618.5" width="15" height="14" fill="#fff" stroke="#000"/><path d="M131 621.5h16M131 624.5h16M131 627.5h16M131 630.5h16M136.5 621v11M141.5 621v11" stroke="#000"/><path d="M140 641.5H156" stroke="#808080" stroke-dasharray="1 1"/><path d="M140 657.5H156" stroke="#808080" stroke-dasharray="1 1"/><path d="M140 673.5H156" stroke="#808080" stroke-dasharray="1 1"/><path d="M140 689.5H156" stroke="#808080" stroke-dasharray="1 1"/><path d="M124 705.5H131" stroke="#808080" stroke-dasharray="1 1"/><rect x="115.5" y="701.5" width="8" height="8" fill="#fff" stroke="#808080"/><path d="M117 705.5h5" stroke="#000"/><path d="M119.5 703v5" stroke="#000"/><rect x="131.5" y="699.5" width="15" height="12" fill="#fff" stroke="#000"/><path d="M143.5 700v11" stroke="#000"/><path d="M124 721.5H131" stroke="#808080" stroke-dasharray="1 1"/><rect x="115.5" y="717.5" width="8" height="8" fill="#fff" stroke="#808080"/><path d="M117 721.5h5" stroke="#000"/><path d="M119.5 719v5" stroke="#000"/><rect x="132.5" y="716.5" width="3" height="10" rx="1" fill="#fff" stroke="#000"/><path d="M138.5 716.5l6-3v9l-6 3z" fill="#fff" stroke="#000"/><path d="M141.5 715v9M138.5 720l6-3" stroke="#000"/><path d="M124 737.5H131" stroke="#808080" stroke-dasharray="1 1"/><rect x="115.5" y="733.5" width="8" height="8" fill="#fff" stroke="#808080"/><path d="M117 737.5h5" stroke="#000"/><path d="M119.5 735v5" stroke="#000"/><rect x="131.5" y="729.5" width="15" height="15" fill="none" stroke="#000" stroke-dasharray="2 1"/><rect x="134.5" y="732.5" width="4" height="5" fill="none" stroke="#000"/><rect x="134.5" y="739.5" width="4" height="3" fill="none" stroke="#000"/><rect x="140.5" y="732.5" width="4" height="10" fill="none" stroke="#000"/><path d="M120 753.5H131" stroke="#808080" stroke-dasharray="1 1"/><rect x="131.5" y="747.5" width="15" height="11" fill="#fff" stroke="#000"/></svg>
<div class="a dith" style="left:112px;top:959px;width:139px;height:12px"></div>
<div class="btn" style="left:112px;top:959px;width:12px;height:12px;"></div>
<svg class="i" style="left:116px;top:962px;" width="4" height="7" viewBox="0 0 4 7"><path d="M4 0L0 3.5L4 7z" fill="#000"/></svg>
<div class="btn" style="left:124px;top:959px;width:86px;height:12px;"></div>
<div class="btn" style="left:238px;top:959px;width:13px;height:12px;"></div>
<svg class="i" style="left:242px;top:962px;" width="4" height="7" viewBox="0 0 4 7"><path d="M0 0L4 3.5L0 7z" fill="#000"/></svg>
<div class="sunk" style="left:0;top:976px;width:1061px;height:18px"></div>
<div class="sunk" style="left:1062px;top:976px;width:28px;height:18px"></div>
<div class="sunk" style="left:1092px;top:976px;width:34px;height:18px"></div>
<div class="t" style="left:1094px;top:979px;letter-spacing:0">NUM</div>
<div class="sunk" style="left:1125px;top:976px;width:32px;height:18px"></div>
<div class="sunk" style="left:1159px;top:976px;width:95px;height:18px"></div>
<svg class="i" style="left:1161px;top:977px;" width="13" height="15" viewBox="0 0 13 15"><path d="M0.5 1h12l-4.5 5v8l-3-2v-6z" fill="#6080c0" stroke="#204080"/></svg>
<div class="t" style="left:1177px;top:979px;letter-spacing:0">:0</div>
<svg class="i" style="left:1258px;top:976px;" width="20" height="18" viewBox="0 0 20 18"><path d="M3 14q0-10 10-12" fill="none" stroke="#4060a0" stroke-width="2"/><path d="M9 17l6-11l6 11z" fill="#ffe000" stroke="#806000"/><path d="M15 9v4M15 14.5v1.5" stroke="#000" stroke-width="1.6"/></svg>
<div class="a" style="left:263px;top:133px;width:1002px;height:1px;background:#000;"></div>
<div class="a" style="left:263px;top:133px;width:1px;height:839px;background:#000;"></div>
<div class="a" style="left:264px;top:134px;width:1001px;height:825px;background:#fff;"></div>
<div class="a" style="left:258px;top:133px;width:1px;height:840px;background:#fff;"></div>
<div class="a" style="left:255px;top:133px;width:1px;height:841px;background:#000;"></div>
<div class="a" style="left:261px;top:973px;width:1019px;height:1px;background:#fff;"></div>
<div class="a dith" style="left:1265px;top:134px;width:13px;height:825px"></div>
<div class="btn" style="left:1265px;top:134px;width:13px;height:13px;"></div>
<svg class="i" style="left:1268px;top:138px;" width="7" height="4" viewBox="0 0 7 4"><path d="M3.5 0L7 4H0z" fill="#000"/></svg>
<div class="btn" style="left:1265px;top:540px;width:13px;height:13px;"></div>
<div class="btn" style="left:1265px;top:946px;width:13px;height:13px;"></div>
<svg class="i" style="left:1268px;top:950px;" width="7" height="4" viewBox="0 0 7 4"><path d="M0 0h7L3.5 4z" fill="#000"/></svg>
<div class="a dith" style="left:521px;top:959px;width:744px;height:13px"></div>
<div class="btn" style="left:880px;top:959px;width:13px;height:13px;"></div>
<div class="btn" style="left:1252px;top:959px;width:13px;height:13px;"></div>
<svg class="i" style="left:1256px;top:962px;" width="4" height="7" viewBox="0 0 4 7"><path d="M0 0L4 3.5L0 7z" fill="#000"/></svg>
<div class="btn" style="left:509px;top:959px;width:13px;height:13px;"></div>
<svg class="i" style="left:513px;top:962px;" width="4" height="7" viewBox="0 0 4 7"><path d="M4 0L0 3.5L4 7z" fill="#000"/></svg>
<div class="a" style="left:264px;top:959px;width:245px;height:13px;background:#c0c0c0;"></div>
<div class="t" style="left:275px;top:961px;">1/4" = 1&#39;-0"</div>
<div class="a" style="left:1265px;top:959px;width:14px;height:13px;background:#c0c0c0;"></div>
<svg class="i" style="left:1266px;top:960px;" width="12" height="12" viewBox="0 0 12 12"><path d="M11 1L1 11M11 5L5 11M11 9L9 11" stroke="#fff"/><path d="M11 2L2 11M11 6L6 11M11 10L10 11" stroke="#808080"/></svg>
<div class="t" style="left:3px;top:978px;letter-spacing:-0.16px">Click to select, TAB for alternates, CTRL adds, SHIFT unselects.</div>
<svg class="i" style="left:347px;top:961px;" width="10" height="9" viewBox="0 0 10 9"><rect x="0.5" y="0.5" width="9" height="8" fill="#fff" stroke="#000"/><rect x="1" y="1" width="4" height="4" fill="#000"/><rect x="5" y="5" width="4" height="3.5" fill="#000"/></svg>
<svg class="i" style="left:364px;top:960px;" width="17" height="11" viewBox="0 0 17 11"><path d="M1 4l7-3l8 2l-7 3z" fill="#c0e0ff" stroke="#2060c0"/><path d="M1 4v4l8 3v-5z" fill="#60a0e0" stroke="#2060c0"/><path d="M9 6l7-3v4l-7 4z" fill="#80c0f0" stroke="#2060c0"/></svg>
<svg class="i" style="left:386px;top:960px;" width="14" height="11" viewBox="0 0 14 11"><path d="M2 10q-2-5 3-9h6l-4 5z" fill="#f0f0f0" stroke="#808080"/><path d="M3 10q5 1 10-2" fill="none" stroke="#a0a0a0" stroke-width="1.5"/></svg>
<svg class="i" style="left:406px;top:959px;" width="16" height="13" viewBox="0 0 16 13"><path d="M1 2h14l-2 7l-4 3h-3l-4-3z" fill="#808080"/><path d="M7 4v4" stroke="#fff" stroke-width="1.5"/><path d="M11 11l4-2" stroke="#fff"/></svg>
<svg class="i" style="left:428px;top:960px;" width="12" height="11" viewBox="0 0 12 11"><path d="M3 0v8h9M0 3h9v8" fill="none" stroke="#0000ff" stroke-width="2"/></svg>
<svg class="i" style="left:449px;top:959px;" width="13" height="12" viewBox="0 0 13 12"><path d="M3 1v8h10M0 4h9v8" fill="none" stroke="#0000ff" stroke-width="2"/><path d="M10 0v3M12 0v3" stroke="#808080"/></svg>
<svg class="i" style="left:468px;top:960px;" width="16" height="11" viewBox="0 0 16 11"><path d="M1 3q1 6 7 5l3-2q4-1 4-4" fill="none" stroke="#404040"/><circle cx="6" cy="6" r="2.5" fill="#fff" stroke="#404040"/><circle cx="12" cy="4.5" r="2.5" fill="#fff" stroke="#404040"/></svg>
<svg class="i" style="left:492px;top:959px;" width="10" height="13" viewBox="0 0 10 13"><circle cx="5" cy="5" r="4" fill="#e8f0f8" stroke="#8090a0"/><rect x="3" y="9" width="4" height="3" fill="#8090a0"/></svg>
<svg class="i" style="left:1110px;top:155px;" width="132" height="135" viewBox="0 0 132 135">
<defs><radialGradient id="sh" cx="0.5" cy="0.5" r="0.5"><stop offset="0.55" stop-color="#c8ccd4" stop-opacity="0.9"/><stop offset="1" stop-color="#fff" stop-opacity="0"/></radialGradient></defs>
<circle cx="65" cy="68" r="51" fill="none" stroke="#e2e6ec" stroke-width="10"/>
<circle cx="65" cy="68" r="45.5" fill="#fff" stroke="#a9adb5" stroke-width="1.6"/>
<rect x="27" y="30" width="76" height="76" fill="url(#sh)"/>
<rect x="39.5" y="43.5" width="51" height="51" fill="#e8ecf2" stroke="#a4a8b0"/>
<rect x="48" y="52" width="33" height="33" fill="#e0e4ea"/>
<text x="65" y="73" text-anchor="middle" font-family="Liberation Sans" font-size="11" font-weight="bold" fill="#8e94a0" letter-spacing="-0.3">TOP</text>
<g font-family="Liberation Sans" font-size="19" font-weight="bold" fill="#a6aab4" text-anchor="middle">
<text x="65" y="20">N</text><text x="65" y="133">S</text><text x="8" y="76">W</text><text x="121" y="76">E</text></g>
</svg>
<svg class="a" style="left:0;top:0" width="1280" height="994" viewBox="0 0 1280 994" shape-rendering="crispEdges">
<defs>
<pattern id="st" width="60" height="60" patternUnits="userSpaceOnUse"><rect width="60" height="60" fill="#fff"/><path fill="#dcdcdc" d="M28 55h1v1h-1zM35 54h1v1h-1zM59 49h1v1h-1zM29 28h1v1h-1zM32 54h1v1h-1zM37 12h1v1h-1zM11 51h1v1h-1zM32 30h1v1h-1zM40 39h1v1h-1zM50 11h1v1h-1zM6 28h1v1h-1zM19 9h1v1h-1zM5 34h1v1h-1zM51 56h1v1h-1zM44 40h1v1h-1zM2 38h1v1h-1zM25 28h1v1h-1zM41 47h1v1h-1zM39 41h1v1h-1zM10 39h1v1h-1zM0 53h1v1h-1zM33 4h1v1h-1zM3 2h1v1h-1zM12 56h1v1h-1zM15 38h1v1h-1zM1 49h1v1h-1zM29 20h1v1h-1zM28 37h1v1h-1zM53 12h1v1h-1zM33 14h1v1h-1zM40 18h1v1h-1zM31 0h1v1h-1zM42 5h1v1h-1zM29 41h1v1h-1zM17 26h1v1h-1zM35 59h1v1h-1zM53 5h1v1h-1zM45 16h1v1h-1zM20 48h1v1h-1zM14 32h1v1h-1zM18 1h1v1h-1zM4 36h1v1h-1zM49 6h1v1h-1zM25 6h1v1h-1zM54 18h1v1h-1zM24 4h1v1h-1zM1 54h1v1h-1zM43 0h1v1h-1zM13 13h1v1h-1zM59 58h1v1h-1zM3 30h1v1h-1zM24 45h1v1h-1zM25 26h1v1h-1zM4 36h1v1h-1zM40 12h1v1h-1zM49 43h1v1h-1zM17 21h1v1h-1zM5 19h1v1h-1zM21 0h1v1h-1zM26 48h1v1h-1zM59 7h1v1h-1zM8 15h1v1h-1zM45 6h1v1h-1zM0 3h1v1h-1zM29 51h1v1h-1zM31 11h1v1h-1zM43 35h1v1h-1zM12 28h1v1h-1zM32 12h1v1h-1zM46 49h1v1h-1zM8 26h1v1h-1zM41 24h1v1h-1zM7 25h1v1h-1zM26 13h1v1h-1zM0 17h1v1h-1zM55 51h1v1h-1zM37 19h1v1h-1zM56 1h1v1h-1zM13 11h1v1h-1zM25 54h1v1h-1zM38 41h1v1h-1zM36 6h1v1h-1zM2 9h1v1h-1zM13 28h1v1h-1zM16 0h1v1h-1zM49 39h1v1h-1zM21 53h1v1h-1zM18 24h1v1h-1zM4 4h1v1h-1zM5 13h1v1h-1zM37 40h1v1h-1zM15 0h1v1h-1zM38 23h1v1h-1zM23 39h1v1h-1zM29 8h1v1h-1zM37 30h1v1h-1zM53 36h1v1h-1zM8 55h1v1h-1zM24 11h1v1h-1zM40 9h1v1h-1zM19 58h1v1h-1zM14 52h1v1h-1zM39 15h1v1h-1zM46 12h1v1h-1zM10 47h1v1h-1zM40 35h1v1h-1zM12 43h1v1h-1zM24 56h1v1h-1zM30 38h1v1h-1zM5 26h1v1h-1zM3 6h1v1h-1zM6 2h1v1h-1zM32 16h1v1h-1zM15 47h1v1h-1zM45 25h1v1h-1zM16 26h1v1h-1zM52 57h1v1h-1zM38 31h1v1h-1zM18 33h1v1h-1zM11 59h1v1h-1zM46 4h1v1h-1zM8 14h1v1h-1zM30 35h1v1h-1zM41 54h1v1h-1zM39 39h1v1h-1zM4 17h1v1h-1zM13 58h1v1h-1zM58 13h1v1h-1zM47 1h1v1h-1zM4 17h1v1h-1zM26 28h1v1h-1zM15 3h1v1h-1zM2 11h1v1h-1zM18 23h1v1h-1zM33 36h1v1h-1zM8 5h1v1h-1zM23 8h1v1h-1zM57 28h1v1h-1zM21 42h1v1h-1zM46 44h1v1h-1zM33 37h1v1h-1zM8 37h1v1h-1zM2 59h1v1h-1zM1 30h1v1h-1zM58 22h1v1h-1zM44 19h1v1h-1zM2 1h1v1h-1zM38 40h1v1h-1zM4 30h1v1h-1zM4 46h1v1h-1zM19 20h1v1h-1zM8 4h1v1h-1zM4 28h1v1h-1zM34 23h1v1h-1zM47 2h1v1h-1zM57 59h1v1h-1zM47 47h1v1h-1zM45 8h1v1h-1zM50 58h1v1h-1zM21 22h1v1h-1zM5 43h1v1h-1zM30 57h1v1h-1zM4 55h1v1h-1zM54 26h1v1h-1zM50 1h1v1h-1zM55 31h1v1h-1zM36 0h1v1h-1zM39 42h1v1h-1zM24 24h1v1h-1zM37 0h1v1h-1zM38 4h1v1h-1zM5 5h1v1h-1zM40 7h1v1h-1zM16 56h1v1h-1zM26 46h1v1h-1zM21 24h1v1h-1zM59 47h1v1h-1zM44 37h1v1h-1zM29 28h1v1h-1zM29 53h1v1h-1zM34 5h1v1h-1zM33 48h1v1h-1zM32 1h1v1h-1zM19 38h1v1h-1zM5 30h1v1h-1zM1 14h1v1h-1zM44 7h1v1h-1zM31 49h1v1h-1zM39 42h1v1h-1zM58 31h1v1h-1zM16 57h1v1h-1zM0 23h1v1h-1zM19 9h1v1h-1zM43 39h1v1h-1zM12 33h1v1h-1zM10 48h1v1h-1zM57 21h1v1h-1zM42 59h1v1h-1zM28 31h1v1h-1zM57 15h1v1h-1zM20 25h1v1h-1zM42 16h1v1h-1zM12 40h1v1h-1zM27 51h1v1h-1zM51 48h1v1h-1zM58 12h1v1h-1zM56 13h1v1h-1zM24 14h1v1h-1zM37 58h1v1h-1zM20 13h1v1h-1zM8 8h1v1h-1zM31 22h1v1h-1zM53 57h1v1h-1zM54 2h1v1h-1zM45 4h1v1h-1zM17 52h1v1h-1zM10 7h1v1h-1zM28 30h1v1h-1zM17 59h1v1h-1zM13 53h1v1h-1zM26 24h1v1h-1zM40 33h1v1h-1zM31 43h1v1h-1zM20 45h1v1h-1zM53 53h1v1h-1zM39 28h1v1h-1zM20 4h1v1h-1zM53 2h1v1h-1zM17 55h1v1h-1zM38 2h1v1h-1zM43 45h1v1h-1zM17 36h1v1h-1zM22 19h1v1h-1zM41 50h1v1h-1zM36 1h1v1h-1zM41 8h1v1h-1zM25 29h1v1h-1zM12 1h1v1h-1zM49 53h1v1h-1zM17 15h1v1h-1zM49 9h1v1h-1zM50 3h1v1h-1zM40 7h1v1h-1zM28 6h1v1h-1zM40 34h1v1h-1zM41 40h1v1h-1zM51 23h1v1h-1zM4 43h1v1h-1zM12 12h1v1h-1zM52 30h1v1h-1zM16 11h1v1h-1zM45 0h1v1h-1zM48 30h1v1h-1zM34 45h1v1h-1zM2 11h1v1h-1zM14 17h1v1h-1zM49 22h1v1h-1zM34 44h1v1h-1zM33 32h1v1h-1zM39 48h1v1h-1zM10 25h1v1h-1zM54 50h1v1h-1zM44 57h1v1h-1zM14 5h1v1h-1zM26 59h1v1h-1zM57 46h1v1h-1zM24 8h1v1h-1zM28 29h1v1h-1zM12 40h1v1h-1zM56 58h1v1h-1zM0 24h1v1h-1zM35 36h1v1h-1zM41 56h1v1h-1zM32 50h1v1h-1zM52 21h1v1h-1zM29 20h1v1h-1zM41 13h1v1h-1zM6 46h1v1h-1zM55 52h1v1h-1zM51 41h1v1h-1zM59 45h1v1h-1zM7 13h1v1h-1zM15 57h1v1h-1zM24 5h1v1h-1zM19 34h1v1h-1zM50 59h1v1h-1zM20 16h1v1h-1zM58 45h1v1h-1zM54 1h1v1h-1zM22 32h1v1h-1zM5 2h1v1h-1zM28 21h1v1h-1zM35 26h1v1h-1zM49 17h1v1h-1zM31 58h1v1h-1zM1 13h1v1h-1zM51 55h1v1h-1zM4 27h1v1h-1zM51 2h1v1h-1zM11 34h1v1h-1zM21 43h1v1h-1zM50 58h1v1h-1zM8 30h1v1h-1zM9 33h1v1h-1zM57 46h1v1h-1zM33 53h1v1h-1zM43 44h1v1h-1zM28 56h1v1h-1zM31 37h1v1h-1zM44 5h1v1h-1zM48 14h1v1h-1zM28 33h1v1h-1zM35 18h1v1h-1zM53 46h1v1h-1zM35 40h1v1h-1zM10 33h1v1h-1zM32 53h1v1h-1zM58 35h1v1h-1zM16 19h1v1h-1zM42 24h1v1h-1zM54 55h1v1h-1zM57 39h1v1h-1zM13 19h1v1h-1zM54 9h1v1h-1zM34 33h1v1h-1zM17 36h1v1h-1zM31 12h1v1h-1zM26 34h1v1h-1zM7 32h1v1h-1zM0 38h1v1h-1zM24 1h1v1h-1zM34 2h1v1h-1zM33 58h1v1h-1zM25 34h1v1h-1zM51 36h1v1h-1zM7 31h1v1h-1zM5 44h1v1h-1zM10 4h1v1h-1zM59 34h1v1h-1zM29 26h1v1h-1zM58 51h1v1h-1zM59 25h1v1h-1zM17 15h1v1h-1zM30 31h1v1h-1zM8 21h1v1h-1zM27 57h1v1h-1zM52 59h1v1h-1zM57 58h1v1h-1zM30 33h1v1h-1zM20 6h1v1h-1zM12 26h1v1h-1zM39 1h1v1h-1zM59 16h1v1h-1zM8 44h1v1h-1zM49 1h1v1h-1zM2 12h1v1h-1zM9 14h1v1h-1zM0 43h1v1h-1zM18 20h1v1h-1zM46 22h1v1h-1zM15 39h1v1h-1zM31 6h1v1h-1zM31 46h1v1h-1zM37 7h1v1h-1zM54 32h1v1h-1zM39 16h1v1h-1zM45 12h1v1h-1zM44 33h1v1h-1zM56 27h1v1h-1zM1 24h1v1h-1zM40 26h1v1h-1zM52 33h1v1h-1zM39 10h1v1h-1zM34 13h1v1h-1zM55 40h1v1h-1zM34 40h1v1h-1zM13 33h1v1h-1zM13 54h1v1h-1zM34 39h1v1h-1zM37 54h1v1h-1zM8 14h1v1h-1zM58 47h1v1h-1zM40 51h1v1h-1zM22 57h1v1h-1zM11 20h1v1h-1zM38 20h1v1h-1zM57 59h1v1h-1zM12 13h1v1h-1zM49 12h1v1h-1zM56 6h1v1h-1zM8 56h1v1h-1zM15 8h1v1h-1zM46 5h1v1h-1zM16 24h1v1h-1zM6 27h1v1h-1zM53 26h1v1h-1zM34 50h1v1h-1zM45 8h1v1h-1zM12 25h1v1h-1zM40 43h1v1h-1zM51 1h1v1h-1zM6 12h1v1h-1zM36 43h1v1h-1zM22 58h1v1h-1zM52 23h1v1h-1zM7 45h1v1h-1zM32 40h1v1h-1zM48 21h1v1h-1zM32 43h1v1h-1zM53 12h1v1h-1zM51 4h1v1h-1zM30 6h1v1h-1zM1 2h1v1h-1zM48 35h1v1h-1zM39 32h1v1h-1zM57 36h1v1h-1zM30 9h1v1h-1zM12 11h1v1h-1zM7 13h1v1h-1zM11 53h1v1h-1z"/><path fill="#e8e8e8" d="M10 18h1v1h-1zM59 43h1v1h-1zM6 37h1v1h-1zM3 8h1v1h-1zM43 29h1v1h-1zM4 48h1v1h-1zM6 20h1v1h-1zM25 29h1v1h-1zM27 32h1v1h-1zM22 27h1v1h-1zM13 38h1v1h-1zM23 0h1v1h-1zM40 44h1v1h-1zM2 54h1v1h-1zM12 11h1v1h-1zM26 29h1v1h-1zM23 47h1v1h-1zM23 25h1v1h-1zM58 12h1v1h-1zM38 10h1v1h-1zM6 32h1v1h-1zM50 0h1v1h-1zM20 57h1v1h-1zM5 51h1v1h-1zM53 45h1v1h-1zM56 55h1v1h-1zM58 40h1v1h-1zM25 36h1v1h-1zM38 12h1v1h-1zM32 37h1v1h-1zM21 51h1v1h-1zM48 16h1v1h-1zM17 58h1v1h-1zM7 47h1v1h-1zM47 49h1v1h-1zM10 52h1v1h-1zM59 25h1v1h-1zM8 57h1v1h-1zM21 56h1v1h-1zM34 44h1v1h-1zM23 49h1v1h-1zM27 48h1v1h-1zM11 25h1v1h-1zM13 46h1v1h-1zM11 4h1v1h-1zM51 21h1v1h-1zM19 30h1v1h-1zM6 0h1v1h-1zM56 22h1v1h-1zM40 57h1v1h-1zM39 3h1v1h-1zM14 17h1v1h-1zM42 19h1v1h-1zM21 13h1v1h-1zM42 25h1v1h-1zM36 11h1v1h-1zM34 4h1v1h-1zM24 32h1v1h-1zM31 41h1v1h-1zM13 44h1v1h-1zM7 48h1v1h-1zM25 36h1v1h-1zM1 7h1v1h-1zM39 6h1v1h-1zM47 15h1v1h-1zM16 28h1v1h-1zM25 32h1v1h-1zM3 48h1v1h-1zM12 41h1v1h-1zM24 0h1v1h-1zM6 16h1v1h-1zM16 17h1v1h-1zM57 21h1v1h-1zM35 34h1v1h-1zM32 26h1v1h-1zM33 36h1v1h-1zM54 6h1v1h-1zM40 28h1v1h-1zM51 41h1v1h-1zM4 35h1v1h-1zM38 42h1v1h-1zM48 2h1v1h-1zM24 59h1v1h-1zM10 24h1v1h-1zM30 10h1v1h-1zM54 31h1v1h-1zM34 39h1v1h-1zM38 3h1v1h-1zM27 31h1v1h-1zM26 18h1v1h-1zM33 25h1v1h-1zM38 19h1v1h-1zM23 33h1v1h-1zM18 30h1v1h-1zM41 17h1v1h-1zM35 59h1v1h-1zM18 42h1v1h-1zM45 47h1v1h-1zM18 1h1v1h-1zM0 49h1v1h-1zM15 37h1v1h-1zM2 40h1v1h-1zM10 26h1v1h-1zM48 43h1v1h-1zM24 3h1v1h-1zM57 20h1v1h-1zM47 25h1v1h-1zM3 37h1v1h-1zM46 20h1v1h-1zM4 51h1v1h-1zM57 14h1v1h-1zM27 46h1v1h-1zM30 16h1v1h-1zM48 15h1v1h-1zM2 33h1v1h-1zM6 59h1v1h-1zM51 46h1v1h-1zM58 29h1v1h-1zM9 52h1v1h-1zM15 38h1v1h-1zM45 7h1v1h-1zM3 39h1v1h-1zM26 29h1v1h-1zM7 13h1v1h-1zM55 3h1v1h-1zM22 33h1v1h-1zM9 7h1v1h-1zM23 28h1v1h-1zM8 42h1v1h-1zM26 29h1v1h-1zM38 16h1v1h-1zM40 37h1v1h-1zM43 26h1v1h-1zM23 49h1v1h-1zM47 33h1v1h-1zM52 8h1v1h-1zM18 46h1v1h-1zM8 15h1v1h-1zM30 7h1v1h-1zM32 57h1v1h-1zM19 50h1v1h-1zM32 39h1v1h-1zM54 22h1v1h-1zM17 17h1v1h-1zM39 43h1v1h-1zM46 36h1v1h-1zM44 37h1v1h-1zM12 40h1v1h-1zM17 48h1v1h-1zM15 12h1v1h-1zM15 32h1v1h-1zM41 58h1v1h-1zM12 56h1v1h-1zM43 2h1v1h-1zM40 3h1v1h-1zM0 17h1v1h-1zM16 27h1v1h-1zM1 39h1v1h-1zM2 6h1v1h-1zM14 34h1v1h-1zM17 4h1v1h-1zM48 5h1v1h-1zM58 43h1v1h-1zM10 35h1v1h-1zM15 40h1v1h-1zM23 30h1v1h-1zM30 22h1v1h-1zM13 21h1v1h-1zM21 31h1v1h-1zM47 8h1v1h-1zM53 55h1v1h-1zM4 51h1v1h-1zM7 28h1v1h-1zM51 52h1v1h-1zM39 53h1v1h-1zM49 49h1v1h-1zM13 28h1v1h-1zM27 47h1v1h-1zM16 24h1v1h-1zM51 9h1v1h-1zM23 9h1v1h-1zM41 53h1v1h-1zM38 20h1v1h-1zM18 35h1v1h-1zM48 47h1v1h-1zM52 58h1v1h-1zM11 27h1v1h-1zM41 23h1v1h-1zM37 6h1v1h-1zM29 56h1v1h-1zM20 5h1v1h-1zM34 5h1v1h-1zM27 36h1v1h-1zM36 31h1v1h-1zM52 43h1v1h-1zM29 19h1v1h-1zM52 49h1v1h-1zM0 4h1v1h-1zM19 13h1v1h-1zM58 42h1v1h-1zM38 5h1v1h-1zM44 19h1v1h-1zM31 46h1v1h-1zM48 44h1v1h-1zM20 18h1v1h-1zM56 9h1v1h-1zM14 22h1v1h-1zM42 46h1v1h-1zM20 23h1v1h-1zM58 7h1v1h-1zM20 45h1v1h-1zM28 36h1v1h-1zM38 58h1v1h-1zM57 43h1v1h-1zM58 17h1v1h-1zM28 33h1v1h-1zM51 19h1v1h-1zM29 20h1v1h-1zM14 25h1v1h-1zM59 46h1v1h-1zM57 33h1v1h-1zM15 5h1v1h-1zM23 53h1v1h-1zM23 1h1v1h-1zM23 43h1v1h-1zM25 37h1v1h-1zM24 50h1v1h-1zM12 47h1v1h-1zM36 23h1v1h-1zM51 24h1v1h-1zM34 9h1v1h-1zM53 37h1v1h-1zM36 11h1v1h-1zM11 5h1v1h-1zM48 29h1v1h-1zM56 54h1v1h-1zM18 51h1v1h-1zM1 14h1v1h-1zM33 3h1v1h-1zM34 10h1v1h-1zM36 18h1v1h-1zM1 41h1v1h-1zM53 51h1v1h-1zM27 4h1v1h-1zM37 34h1v1h-1zM19 50h1v1h-1zM34 5h1v1h-1zM21 5h1v1h-1zM17 47h1v1h-1zM6 57h1v1h-1zM20 5h1v1h-1zM1 40h1v1h-1zM41 9h1v1h-1zM6 47h1v1h-1zM52 41h1v1h-1zM27 15h1v1h-1zM45 14h1v1h-1zM31 48h1v1h-1zM58 33h1v1h-1zM21 48h1v1h-1zM29 25h1v1h-1zM22 21h1v1h-1zM51 21h1v1h-1zM43 8h1v1h-1zM31 31h1v1h-1zM34 51h1v1h-1zM46 4h1v1h-1zM45 39h1v1h-1zM58 2h1v1h-1zM26 48h1v1h-1zM52 42h1v1h-1zM22 54h1v1h-1zM0 51h1v1h-1zM24 53h1v1h-1zM5 56h1v1h-1zM29 34h1v1h-1zM40 1h1v1h-1zM33 23h1v1h-1zM45 0h1v1h-1zM51 7h1v1h-1zM26 59h1v1h-1zM26 58h1v1h-1zM9 15h1v1h-1zM47 10h1v1h-1zM40 24h1v1h-1zM43 10h1v1h-1zM20 13h1v1h-1zM24 27h1v1h-1zM33 18h1v1h-1zM17 56h1v1h-1zM3 30h1v1h-1zM19 46h1v1h-1zM7 19h1v1h-1zM41 9h1v1h-1zM49 58h1v1h-1zM11 58h1v1h-1zM3 48h1v1h-1zM29 1h1v1h-1zM37 30h1v1h-1zM58 51h1v1h-1zM2 20h1v1h-1zM6 12h1v1h-1zM11 22h1v1h-1zM13 37h1v1h-1zM15 38h1v1h-1zM45 30h1v1h-1zM38 32h1v1h-1zM14 28h1v1h-1zM11 57h1v1h-1zM17 25h1v1h-1zM11 58h1v1h-1zM48 59h1v1h-1zM19 40h1v1h-1zM35 52h1v1h-1zM35 30h1v1h-1zM54 16h1v1h-1zM31 56h1v1h-1zM25 58h1v1h-1zM21 42h1v1h-1zM35 49h1v1h-1zM5 30h1v1h-1zM55 14h1v1h-1zM25 3h1v1h-1zM13 8h1v1h-1zM51 51h1v1h-1zM24 33h1v1h-1zM50 33h1v1h-1zM49 17h1v1h-1zM50 3h1v1h-1zM42 59h1v1h-1zM15 57h1v1h-1zM0 55h1v1h-1zM30 57h1v1h-1zM23 28h1v1h-1zM50 15h1v1h-1zM45 26h1v1h-1zM38 55h1v1h-1zM10 26h1v1h-1zM10 49h1v1h-1zM20 9h1v1h-1zM16 58h1v1h-1zM55 51h1v1h-1zM33 8h1v1h-1zM40 47h1v1h-1zM39 17h1v1h-1zM33 34h1v1h-1zM3 9h1v1h-1zM36 49h1v1h-1zM11 0h1v1h-1zM13 52h1v1h-1zM58 54h1v1h-1zM9 52h1v1h-1zM8 5h1v1h-1zM22 17h1v1h-1zM39 45h1v1h-1zM33 6h1v1h-1zM56 30h1v1h-1zM44 29h1v1h-1zM5 47h1v1h-1zM37 34h1v1h-1zM54 32h1v1h-1zM19 1h1v1h-1zM50 12h1v1h-1zM26 12h1v1h-1zM58 43h1v1h-1zM5 50h1v1h-1zM52 28h1v1h-1zM13 2h1v1h-1zM34 26h1v1h-1zM33 31h1v1h-1zM10 53h1v1h-1zM19 20h1v1h-1zM19 25h1v1h-1zM4 35h1v1h-1zM19 29h1v1h-1zM42 45h1v1h-1zM4 23h1v1h-1zM4 43h1v1h-1zM8 6h1v1h-1zM42 25h1v1h-1zM43 29h1v1h-1zM47 50h1v1h-1zM53 7h1v1h-1zM41 28h1v1h-1zM0 55h1v1h-1zM24 45h1v1h-1zM45 30h1v1h-1zM15 18h1v1h-1zM36 7h1v1h-1zM29 49h1v1h-1zM0 54h1v1h-1zM54 51h1v1h-1zM46 13h1v1h-1zM57 39h1v1h-1zM9 18h1v1h-1zM40 24h1v1h-1zM59 34h1v1h-1zM47 19h1v1h-1zM21 48h1v1h-1zM25 35h1v1h-1zM42 5h1v1h-1zM16 12h1v1h-1zM12 24h1v1h-1zM46 7h1v1h-1zM21 19h1v1h-1zM17 36h1v1h-1zM30 46h1v1h-1zM40 21h1v1h-1zM28 52h1v1h-1zM24 5h1v1h-1zM6 9h1v1h-1zM39 6h1v1h-1zM8 43h1v1h-1zM40 45h1v1h-1zM11 11h1v1h-1zM12 25h1v1h-1zM2 53h1v1h-1zM29 37h1v1h-1zM45 5h1v1h-1zM6 14h1v1h-1zM2 10h1v1h-1zM7 27h1v1h-1zM26 49h1v1h-1zM4 21h1v1h-1zM58 52h1v1h-1zM27 59h1v1h-1zM32 8h1v1h-1zM41 13h1v1h-1zM49 9h1v1h-1zM52 44h1v1h-1zM24 30h1v1h-1zM21 58h1v1h-1zM26 39h1v1h-1zM0 46h1v1h-1zM25 39h1v1h-1zM44 20h1v1h-1zM50 50h1v1h-1zM15 42h1v1h-1zM38 33h1v1h-1zM1 16h1v1h-1zM21 12h1v1h-1zM21 19h1v1h-1zM41 28h1v1h-1zM6 35h1v1h-1zM24 13h1v1h-1zM32 21h1v1h-1zM50 18h1v1h-1zM52 6h1v1h-1zM39 45h1v1h-1zM10 16h1v1h-1zM49 34h1v1h-1zM57 19h1v1h-1zM35 14h1v1h-1zM22 39h1v1h-1zM32 32h1v1h-1zM9 36h1v1h-1zM45 12h1v1h-1zM59 33h1v1h-1zM45 45h1v1h-1zM53 59h1v1h-1zM12 36h1v1h-1zM1 40h1v1h-1zM42 12h1v1h-1zM49 5h1v1h-1zM8 15h1v1h-1zM30 36h1v1h-1zM26 44h1v1h-1zM21 21h1v1h-1zM5 59h1v1h-1zM55 23h1v1h-1zM17 29h1v1h-1zM56 7h1v1h-1zM28 46h1v1h-1zM8 15h1v1h-1zM57 36h1v1h-1zM34 34h1v1h-1zM35 4h1v1h-1zM35 58h1v1h-1zM16 10h1v1h-1zM58 47h1v1h-1zM57 52h1v1h-1zM21 38h1v1h-1zM9 7h1v1h-1zM59 52h1v1h-1zM0 18h1v1h-1zM43 57h1v1h-1zM23 15h1v1h-1zM48 36h1v1h-1zM23 53h1v1h-1zM10 11h1v1h-1zM38 35h1v1h-1zM51 4h1v1h-1zM29 2h1v1h-1zM25 11h1v1h-1zM50 59h1v1h-1zM42 8h1v1h-1zM19 48h1v1h-1zM42 54h1v1h-1zM47 58h1v1h-1zM24 39h1v1h-1z"/><path fill="#cccccc" d="M37 40h1v1h-1zM51 48h1v1h-1zM1 10h1v1h-1zM12 26h1v1h-1zM29 2h1v1h-1zM9 33h1v1h-1zM24 7h1v1h-1zM36 25h1v1h-1zM11 21h1v1h-1zM33 8h1v1h-1zM16 15h1v1h-1zM36 59h1v1h-1zM21 3h1v1h-1zM41 50h1v1h-1zM2 46h1v1h-1zM42 50h1v1h-1zM9 25h1v1h-1zM31 38h1v1h-1zM6 30h1v1h-1zM22 26h1v1h-1zM57 39h1v1h-1zM58 44h1v1h-1zM36 48h1v1h-1zM26 48h1v1h-1zM18 31h1v1h-1zM56 29h1v1h-1zM53 57h1v1h-1zM54 44h1v1h-1zM26 52h1v1h-1zM27 7h1v1h-1zM36 7h1v1h-1zM57 33h1v1h-1zM21 33h1v1h-1zM33 27h1v1h-1zM26 57h1v1h-1zM1 20h1v1h-1zM58 3h1v1h-1zM18 46h1v1h-1zM39 57h1v1h-1zM27 46h1v1h-1zM24 38h1v1h-1zM20 48h1v1h-1zM50 19h1v1h-1zM56 37h1v1h-1zM56 4h1v1h-1zM15 7h1v1h-1zM54 28h1v1h-1zM15 32h1v1h-1zM55 25h1v1h-1zM3 30h1v1h-1zM44 6h1v1h-1zM33 58h1v1h-1zM15 34h1v1h-1zM19 42h1v1h-1zM25 15h1v1h-1zM56 4h1v1h-1zM58 46h1v1h-1zM55 42h1v1h-1zM23 55h1v1h-1zM34 26h1v1h-1z"/></pattern>
<pattern id="yl" width="4" height="3" patternUnits="userSpaceOnUse"><rect width="4" height="3" fill="#fff2b8"/><rect y="2" width="4" height="1" fill="#f2dc98"/></pattern>
</defs>
<!-- patios -->
<path d="M527 377 H509 A43.5 43.5 0 0 0 509 464 V518 H527 Z" fill="url(#st)" stroke="#a0a0a0" stroke-width="1" shape-rendering="geometricPrecision"/>
<line x1="509" y1="497.5" x2="527" y2="497.5" stroke="#a0a0a0"/>
<line x1="509" y1="464.5" x2="527" y2="464.5" stroke="#a0a0a0"/>
<rect x="992.5" y="490.5" width="114" height="190" fill="url(#st)" stroke="#a0a0a0"/>
<!-- house interior base -->
<rect x="544" y="352" width="195" height="66" fill="#c6c6c6"/>
<rect x="544" y="417" width="434" height="133" fill="#c6c6c6"/>
<rect x="723" y="549" width="10" height="28" fill="#c6c6c6"/>
<!-- top strip -->
<rect x="545" y="352" width="194" height="5" fill="#f4f4f4"/>
<rect x="545" y="353" width="4" height="3" fill="#f0f080"/>
<rect x="545" y="357" width="98" height="4" fill="#e2e2e2"/>
<rect x="642" y="357" width="97" height="4" fill="#a4a4a4"/>
<!-- small patio inside top-left -->
<rect x="545" y="361" width="40" height="17" fill="#fff"/>
<rect x="545" y="377" width="40" height="68" fill="url(#st)"/>
<line x1="545" y1="377.5" x2="585" y2="377.5" stroke="#a8a8a8"/>
<rect x="545" y="445" width="40" height="8" fill="#fff"/>
<rect x="545" y="452" width="42" height="5" fill="#e6e6e6"/>
<rect x="584" y="369" width="1" height="82" fill="#a0a0a0"/>
<rect x="585" y="361" width="5" height="101" fill="#e6e6e6"/>
<!-- room rect -->
<rect x="599" y="365.5" width="126" height="78" fill="none" stroke="#e8e8e8" stroke-width="2.4"/>
<!-- walls -->
<g fill="#e6e6e6">
<rect x="587" y="459" width="30" height="4"/>
<rect x="613" y="455" width="4" height="8"/>
<rect x="613" y="455" width="79" height="3"/>
<rect x="689" y="455" width="3" height="96"/>
<rect x="648" y="455" width="3" height="49"/>
<rect x="648" y="501" width="11" height="3"/>
<rect x="656" y="501" width="3" height="50"/>
<rect x="658" y="526" width="31" height="3"/>
<polyline points="550,504.5 562,504.5 577.5,519 577.5,551" fill="none" stroke="#e6e6e6" stroke-width="3" shape-rendering="geometricPrecision"/>
<rect x="545" y="549" width="146" height="4"/>
<rect x="545" y="418" width="5" height="131"/>
<rect x="735" y="361" width="4" height="95"/>
<rect x="723" y="455" width="21" height="3"/>
<rect x="723" y="455" width="3" height="122"/>
<rect x="741" y="455" width="3" height="59"/>
<rect x="726" y="568" width="7" height="9"/>
<rect x="735" y="418" width="243" height="3"/>
<rect x="690" y="511" width="175" height="3"/>
<rect x="836" y="418" width="3" height="95"/>
<rect x="836" y="461" width="73" height="3"/>
<rect x="836" y="492" width="28" height="3"/>
<rect x="862" y="461" width="3" height="75"/>
<rect x="863" y="535" width="4" height="14"/>
<rect x="906" y="461" width="3" height="82"/>
<rect x="908" y="477" width="20" height="3"/>
<rect x="908" y="531" width="20" height="3"/>
<rect x="926" y="418" width="3" height="131"/>
<rect x="836" y="542" width="88" height="3"/>
<rect x="836" y="542" width="3" height="8"/>
<rect x="843" y="542" width="2" height="8"/>
<rect x="883" y="542" width="2" height="8"/>
<rect x="921" y="542" width="3" height="8"/>
<rect x="806" y="513" width="3" height="37"/>
<rect x="973" y="418" width="5" height="132" fill="#d6d6d6"/><rect x="973" y="421" width="1" height="128" fill="#a8a8a8"/>
</g>
<rect x="972" y="509" width="1" height="40" fill="#f4f4f4"/>
<rect x="549" y="421" width="1" height="128" fill="#a8a8a8"/>
<!-- garage interior -->
<rect x="441" y="535" width="104" height="196" fill="url(#st)"/>
<rect x="545" y="553" width="105" height="178" fill="url(#st)"/>
<rect x="545" y="549" width="108" height="4" fill="#e6e6e6"/>
<rect x="441" y="535" width="104" height="4" fill="#e6e6e6"/>
<rect x="541" y="535" width="4" height="18" fill="#e6e6e6"/>
<rect x="441" y="535" width="5" height="98" fill="#d4d4d4"/>
<rect x="441" y="632" width="5" height="99" fill="#a6a6a6"/>
<rect x="446" y="560" width="6" height="148" fill="#e6e6e6" stroke="#a8a8a8" stroke-width="0.6"/>
<rect x="452.5" y="563.5" width="16" height="140" fill="#fff" stroke="#a0a0a0"/>
<rect x="441" y="727" width="209" height="4" fill="#e6e6e6"/>
<rect x="644" y="553" width="6" height="178" fill="#e6e6e6"/>
<rect x="645" y="617" width="5" height="97" fill="#a6a6a6"/>
<rect x="545" y="549" width="5" height="51" fill="#a6a6a6"/>
<g stroke="#8c8c8c" stroke-width="0.8" shape-rendering="geometricPrecision">
<line x1="446" y1="543" x2="529" y2="632"/><line x1="529" y1="632" x2="642" y2="728"/>
<line x1="446" y1="723" x2="529" y2="632"/><line x1="529" y1="632" x2="642" y2="553"/>
</g>
<!-- stairs -->
<rect x="692" y="514" width="31" height="39" fill="url(#yl)"/>
<rect x="650" y="553" width="73" height="123" fill="url(#yl)"/>
<rect x="726" y="577" width="7" height="99" fill="url(#yl)"/>
<rect x="653" y="553" width="1" height="123" fill="#b0b0b0"/>
<rect x="722" y="553" width="1" height="123" fill="#b0b0b0"/>
<rect x="725.5" y="665.5" width="7" height="10" fill="none" stroke="#c0c0c0"/>
<rect x="650" y="676" width="83" height="4" fill="#e6e6e6"/>
<!-- roofs -->
<g>
<polygon points="527,334 756,334 739,352 544,352" fill="#8ca0b5"/>
<polygon points="527,334 544,352 544,535 527,518" fill="#9cb1c8"/>
<polygon points="756,334 756,399 739,417 739,352" fill="#6c7d8f"/>
<polygon points="756,399 1046,399 1028,417 739,417" fill="#8ca0b5"/>
<rect x="978" y="417" width="50" height="88" fill="#8ca0b5"/>
<polygon points="1046,399 1046,488 1028,505 1028,417" fill="#6c7d8f"/>
<polygon points="978,505 1028,505 1028,550 1053,550 1053,592 978,592" fill="#72839a"/>
<polygon points="1028,505 1046,488 1070,488 1053,506 1028,506" fill="#8ca0b5"/>
<rect x="1028" y="506" width="25" height="44" fill="#8ca0b5"/>
<polygon points="1070,488 1070,610 1053,592 1053,506" fill="#6c7d8f"/>
<polygon points="978,592 1053,592 1070,610 992,610 978,597" fill="#72839a"/>
<polygon points="978,597 992,610 992,696 978,682" fill="#6c7d8f"/>
<rect x="733" y="549" width="123" height="133" fill="#9cb1c8"/>
<rect x="856" y="549" width="122" height="133" fill="#6c7d8f"/>
<polygon points="973,549 978,549 978,666 973,661" fill="#a8a8a8"/>
<polygon points="650,682 978,682 992,696 667,696" fill="#73849a"/>
<polygon points="803,682 847,682 847,758 789,758 789,696" fill="#9cb1c8"/>
<polygon points="847,682 889,682 903,696 903,758 847,758" fill="#6c7d8f"/>
<polygon points="422,518 527,518 544,535 441,535" fill="#8ca0b5"/>
<polygon points="422,518 441,535 441,731 422,748" fill="#9cb1c8"/>
<polygon points="422,748 441,731 650,731 667,748" fill="#73849a"/>
<polygon points="650,682 667,696 667,748 650,731" fill="#6c7d8f"/>
</g>
<!-- roof edge lines -->
<g stroke="#a8b4c0" stroke-width="1" fill="none">
<line x1="978" y1="505.5" x2="1028" y2="505.5"/>
<line x1="1028.5" y1="417" x2="1028.5" y2="505"/>
<line x1="1028" y1="550.5" x2="1053" y2="550.5"/>
<line x1="1053.5" y1="506" x2="1053.5" y2="592"/>
<line x1="978" y1="592.5" x2="1053" y2="592.5"/>
<line x1="1053" y1="592" x2="1070" y2="610" shape-rendering="geometricPrecision"/>
</g>
<!-- sketch lines -->
<rect x="544.5" y="417.5" width="433" height="265" fill="none" stroke="#ff00ff" stroke-width="1.2"/>
<line x1="855.5" y1="549" x2="855.5" y2="682" stroke="#a8b4c4"/>
<line x1="544.5" y1="637.5" x2="978" y2="637.5" stroke="#0000ff" stroke-width="1.3" stroke-dasharray="8.5 3.3 3 3.3"/>
<g stroke="#e000e0" stroke-width="1" fill="none" shape-rendering="geometricPrecision">
<line x1="823" y1="604" x2="889" y2="670"/>
<line x1="823" y1="670" x2="889" y2="604"/>
<polyline points="883,655 868,668.5 886,668.5"/>
<polyline points="735,445 719,457.5 735,457.5"/>
<polyline points="662,660 647,672.5 663,672.5"/>
</g>
</svg>

</body></html>
